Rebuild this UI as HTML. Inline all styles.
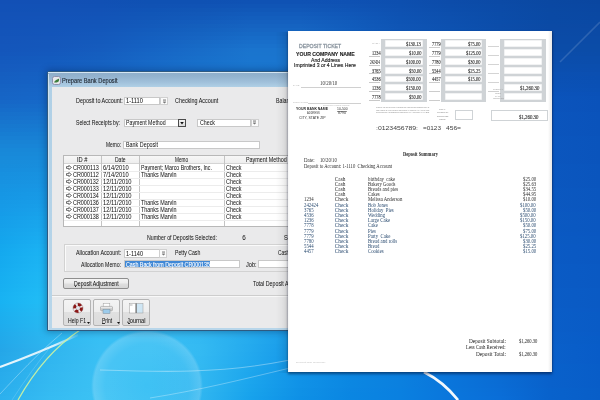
<!DOCTYPE html>
<html><head><meta charset="utf-8"><style>
html,body{margin:0;padding:0;}
body{width:600px;height:400px;overflow:hidden;position:relative;font-family:"Liberation Sans",sans-serif;}
#s{position:absolute;left:0;top:0;width:600px;height:400px;will-change:transform;}
#s>div,#s>svg{position:absolute;}
.t{white-space:pre;transform-origin:0 50%;}
#bg{position:absolute;left:0;top:0;width:600px;height:400px;}
</style></head><body>
<div id="bgrows"><div style="position:absolute;left:0;top:0px;width:600px;height:4px;background:linear-gradient(90deg,#1250b6 0.00%,#1250b5 8.33%,#1150b4 16.67%,#0f51b3 25.00%,#0f51b3 33.33%,#0f52b4 41.67%,#0f52b4 50.00%,#0e51b3 58.33%,#0d4faf 66.67%,#0c4caa 75.00%,#0b4aa6 83.33%,#0a48a2 91.67%,#0a46a0 100.00%)"></div>
<div style="position:absolute;left:0;top:4px;width:600px;height:4px;background:linear-gradient(90deg,#1251b7 0.00%,#1251b6 8.33%,#1151b5 16.67%,#1052b4 25.00%,#1053b5 33.33%,#1055b6 41.67%,#1055b6 50.00%,#0f53b4 58.33%,#0d50b0 66.67%,#0c4dab 75.00%,#0b4ba7 83.33%,#0a48a3 91.67%,#0a47a1 100.00%)"></div>
<div style="position:absolute;left:0;top:8px;width:600px;height:4px;background:linear-gradient(90deg,#1251b7 0.00%,#1252b6 8.33%,#1252b6 16.67%,#1054b6 25.00%,#1156b6 33.33%,#1158b8 41.67%,#1158b8 50.00%,#0f55b6 58.33%,#0e51b1 66.67%,#0c4eac 75.00%,#0b4ba8 83.33%,#0a49a3 91.67%,#0a47a2 100.00%)"></div>
<div style="position:absolute;left:0;top:12px;width:600px;height:4px;background:linear-gradient(90deg,#1352b7 0.00%,#1352b7 8.33%,#1253b7 16.67%,#1156b7 25.00%,#1258b8 33.33%,#125bbb 41.67%,#125bbb 50.00%,#1057b8 58.33%,#0e52b2 66.67%,#0d4fad 75.00%,#0b4ca8 83.33%,#0a49a4 91.67%,#0a48a2 100.00%)"></div>
<div style="position:absolute;left:0;top:16px;width:600px;height:4px;background:linear-gradient(90deg,#1352b8 0.00%,#1353b8 8.33%,#1254b8 16.67%,#1257b8 25.00%,#125aba 33.33%,#135ebd 41.67%,#135ebd 50.00%,#1059b9 58.33%,#0e53b3 66.67%,#0d50ae 75.00%,#0b4ca9 83.33%,#0a49a4 91.67%,#0a48a3 100.00%)"></div>
<div style="position:absolute;left:0;top:20px;width:600px;height:4px;background:linear-gradient(90deg,#1353b8 0.00%,#1354b8 8.33%,#1355b8 16.67%,#1259ba 25.00%,#135cbc 33.33%,#1460bf 41.67%,#1460bf 50.00%,#115bbb 58.33%,#0e54b4 66.67%,#0d50af 75.00%,#0b4daa 83.33%,#0a4aa5 91.67%,#0a49a4 100.00%)"></div>
<div style="position:absolute;left:0;top:24px;width:600px;height:4px;background:linear-gradient(90deg,#1353b9 0.00%,#1354b9 8.33%,#1356b9 16.67%,#135abb 25.00%,#145fbd 33.33%,#1563c1 41.67%,#1563c1 50.00%,#115cbc 58.33%,#0f55b5 66.67%,#0d51b0 75.00%,#0c4daa 83.33%,#0b4aa5 91.67%,#0b49a4 100.00%)"></div>
<div style="position:absolute;left:0;top:28px;width:600px;height:4px;background:linear-gradient(90deg,#1354b9 0.00%,#1355b9 8.33%,#1357ba 16.67%,#135cbd 25.00%,#1461bf 33.33%,#1666c3 41.67%,#1666c3 50.00%,#125ebe 58.33%,#0f56b6 66.67%,#0d52b1 75.00%,#0c4eab 83.33%,#0b4aa6 91.67%,#0b4aa5 100.00%)"></div>
<div style="position:absolute;left:0;top:32px;width:600px;height:4px;background:linear-gradient(90deg,#1354b9 0.00%,#1355ba 8.33%,#1458bb 16.67%,#145ebe 25.00%,#1563c1 33.33%,#1669c5 41.67%,#1669c5 50.00%,#1260c0 58.33%,#0f58b8 66.67%,#0d53b2 75.00%,#0c4eab 83.33%,#0b4ba6 91.67%,#0b4aa5 100.00%)"></div>
<div style="position:absolute;left:0;top:36px;width:600px;height:4px;background:linear-gradient(90deg,#1455ba 0.00%,#1456ba 8.33%,#1459bc 16.67%,#145fc0 25.00%,#1665c3 33.33%,#176cc8 41.67%,#176cc8 50.00%,#1362c1 58.33%,#0f59b9 66.67%,#0e54b3 75.00%,#0c4fac 83.33%,#0b4ba7 91.67%,#0b4ba6 100.00%)"></div>
<div style="position:absolute;left:0;top:40px;width:600px;height:4px;background:linear-gradient(90deg,#1455ba 0.00%,#1457bb 8.33%,#145abc 16.67%,#1561c1 25.00%,#1768c4 33.33%,#186eca 41.67%,#186eca 50.00%,#1364c3 58.33%,#105aba 66.67%,#0e54b4 75.00%,#0c4fad 83.33%,#0b4ba7 91.67%,#0b4ba7 100.00%)"></div>
<div style="position:absolute;left:0;top:44px;width:600px;height:4px;background:linear-gradient(90deg,#1456bb 0.00%,#1457bb 8.33%,#155bbd 16.67%,#1562c3 25.00%,#176ac6 33.33%,#1971cc 41.67%,#1971cc 50.00%,#1466c4 58.33%,#105bbb 66.67%,#0e55b5 75.00%,#0c50ad 83.33%,#0b4ca8 91.67%,#0b4ca7 100.00%)"></div>
<div style="position:absolute;left:0;top:48px;width:600px;height:4px;background:linear-gradient(90deg,#1456bb 0.00%,#1458bc 8.33%,#155cbe 16.67%,#1664c4 25.00%,#186cc8 33.33%,#1a74ce 41.67%,#1a74ce 50.00%,#1468c6 58.33%,#105cbc 66.67%,#0e56b6 75.00%,#0c50ae 83.33%,#0b4ca8 91.67%,#0b4ca8 100.00%)"></div>
<div style="position:absolute;left:0;top:52px;width:600px;height:4px;background:linear-gradient(90deg,#1457bc 0.00%,#1459bd 8.33%,#155ebf 16.67%,#1666c5 25.00%,#186dc9 33.33%,#1a75ce 41.67%,#1a74ce 50.00%,#1468c6 58.33%,#105cbc 66.67%,#0e56b6 75.00%,#0c50af 83.33%,#0b4daa 91.67%,#0b4ca9 100.00%)"></div>
<div style="position:absolute;left:0;top:56px;width:600px;height:4px;background:linear-gradient(90deg,#1459bd 0.00%,#145bbe 8.33%,#155fc0 16.67%,#1767c6 25.00%,#186fca 33.33%,#1a75cf 41.67%,#1a75cf 50.00%,#1469c7 58.33%,#105dbd 66.67%,#0e56b6 75.00%,#0c51af 83.33%,#0b4dab 91.67%,#0b4dab 100.00%)"></div>
<div style="position:absolute;left:0;top:60px;width:600px;height:4px;background:linear-gradient(90deg,#145abe 0.00%,#145cbf 8.33%,#1661c1 16.67%,#1769c7 25.00%,#1870cb 33.33%,#1a76cf 41.67%,#1a75cf 50.00%,#1469c7 58.33%,#105dbd 66.67%,#0e56b6 75.00%,#0c51b0 83.33%,#0b4ead 91.67%,#0b4dac 100.00%)"></div>
<div style="position:absolute;left:0;top:64px;width:600px;height:4px;background:linear-gradient(90deg,#155bbf 0.00%,#155dc0 8.33%,#1662c2 16.67%,#176ac8 25.00%,#1971cc 33.33%,#1a77d0 41.67%,#1975cf 50.00%,#1469c7 58.33%,#105dbd 66.67%,#0e57b7 75.00%,#0c52b1 83.33%,#0b4fae 91.67%,#0b4eae 100.00%)"></div>
<div style="position:absolute;left:0;top:68px;width:600px;height:4px;background:linear-gradient(90deg,#155cbf 0.00%,#155ec1 8.33%,#1664c4 16.67%,#186cca 25.00%,#1972cd 33.33%,#1a77d0 41.67%,#1976d0 50.00%,#146ac8 58.33%,#105ebe 66.67%,#0e57b7 75.00%,#0c52b1 83.33%,#0b4fb0 91.67%,#0b4eaf 100.00%)"></div>
<div style="position:absolute;left:0;top:72px;width:600px;height:4px;background:linear-gradient(90deg,#155ec0 0.00%,#1560c2 8.33%,#1666c5 16.67%,#186ecb 25.00%,#1974ce 33.33%,#1a78d1 41.67%,#1976d0 50.00%,#146ac8 58.33%,#105ebe 66.67%,#0e57b7 75.00%,#0c52b2 83.33%,#0b50b2 91.67%,#0b4fb1 100.00%)"></div>
<div style="position:absolute;left:0;top:76px;width:600px;height:4px;background:linear-gradient(90deg,#155fc1 0.00%,#1561c3 8.33%,#1767c6 16.67%,#186fcc 25.00%,#1975cf 33.33%,#1a78d1 41.67%,#1976d0 50.00%,#146ac8 58.33%,#105ebe 66.67%,#0e57b7 75.00%,#0d53b2 83.33%,#0b50b3 91.67%,#0a4fb2 100.00%)"></div>
<div style="position:absolute;left:0;top:80px;width:600px;height:4px;background:linear-gradient(90deg,#1560c2 0.00%,#1562c4 8.33%,#1769c7 16.67%,#1971cd 25.00%,#1976d0 33.33%,#1a79d2 41.67%,#1977d1 50.00%,#146bc9 58.33%,#105fbf 66.67%,#0e57b7 75.00%,#0d53b3 83.33%,#0b51b5 91.67%,#0a50b4 100.00%)"></div>
<div style="position:absolute;left:0;top:84px;width:600px;height:4px;background:linear-gradient(90deg,#1562c3 0.00%,#1564c5 8.33%,#176ac8 16.67%,#1972ce 25.00%,#1978d1 33.33%,#1a7ad2 41.67%,#1977d1 50.00%,#146bc9 58.33%,#105fbf 66.67%,#0e57b7 75.00%,#0d54b4 83.33%,#0b52b6 91.67%,#0a50b5 100.00%)"></div>
<div style="position:absolute;left:0;top:88px;width:600px;height:4px;background:linear-gradient(90deg,#1663c4 0.00%,#1665c6 8.33%,#176cc9 16.67%,#1974cf 25.00%,#1a79d2 33.33%,#1a7ad3 41.67%,#1877d1 50.00%,#146bc9 58.33%,#105fbf 66.67%,#0e58b8 75.00%,#0d54b4 83.33%,#0b52b8 91.67%,#0a51b6 100.00%)"></div>
<div style="position:absolute;left:0;top:92px;width:600px;height:4px;background:linear-gradient(90deg,#1664c5 0.00%,#1666c7 8.33%,#186eca 16.67%,#1a76d0 25.00%,#1a7ad3 33.33%,#1a7bd3 41.67%,#1878d2 50.00%,#146cca 58.33%,#1060c0 66.67%,#0e58b8 75.00%,#0d54b5 83.33%,#0b53ba 91.67%,#0a51b8 100.00%)"></div>
<div style="position:absolute;left:0;top:96px;width:600px;height:4px;background:linear-gradient(90deg,#1665c6 0.00%,#1667c8 8.33%,#186fcb 16.67%,#1a77d1 25.00%,#1a7bd4 33.33%,#1a7cd4 41.67%,#1878d2 50.00%,#146cca 58.33%,#1060c0 66.67%,#0e58b8 75.00%,#0d55b6 83.33%,#0b54bb 91.67%,#0a52b9 100.00%)"></div>
<div style="position:absolute;left:0;top:100px;width:600px;height:4px;background:linear-gradient(90deg,#1667c7 0.00%,#1669c9 8.33%,#1871cd 16.67%,#1a79d3 25.00%,#1a7dd4 33.33%,#1a7cd4 41.67%,#1878d2 50.00%,#146cca 58.33%,#1060c0 66.67%,#0e58b8 75.00%,#0d55b6 83.33%,#0b54bc 91.67%,#0a52ba 100.00%)"></div>
<div style="position:absolute;left:0;top:104px;width:600px;height:4px;background:linear-gradient(90deg,#166ac8 0.00%,#166cca 8.33%,#1874ce 16.67%,#1a7bd4 25.00%,#1a7ed5 33.33%,#1a7dd5 41.67%,#1879d3 50.00%,#146dcb 58.33%,#1061c1 66.67%,#0e59b9 75.00%,#0d55b6 83.33%,#0b54bc 91.67%,#0a52ba 100.00%)"></div>
<div style="position:absolute;left:0;top:108px;width:600px;height:4px;background:linear-gradient(90deg,#166dca 0.00%,#166ecb 8.33%,#1976d0 16.67%,#1b7dd5 25.00%,#1b80d6 33.33%,#1a7ed6 41.67%,#187ad3 50.00%,#146ecb 58.33%,#1062c1 66.67%,#0e59b9 75.00%,#0d56b6 83.33%,#0b54bc 91.67%,#0a52ba 100.00%)"></div>
<div style="position:absolute;left:0;top:112px;width:600px;height:4px;background:linear-gradient(90deg,#1770cb 0.00%,#1771cc 8.33%,#1978d1 16.67%,#1b7fd6 25.00%,#1b81d7 33.33%,#1b7fd6 41.67%,#197ad4 50.00%,#156ecc 58.33%,#1162c2 66.67%,#0e5aba 75.00%,#0d56b7 83.33%,#0b55bd 91.67%,#0a53bb 100.00%)"></div>
<div style="position:absolute;left:0;top:116px;width:600px;height:4px;background:linear-gradient(90deg,#1772cc 0.00%,#1774ce 8.33%,#197bd2 16.67%,#1b81d7 25.00%,#1b82d8 33.33%,#1b80d7 41.67%,#197bd4 50.00%,#156fcc 58.33%,#1163c2 66.67%,#0e5aba 75.00%,#0d56b7 83.33%,#0b55bd 91.67%,#0a53bb 100.00%)"></div>
<div style="position:absolute;left:0;top:120px;width:600px;height:4px;background:linear-gradient(90deg,#1775ce 0.00%,#1776cf 8.33%,#1a7dd4 16.67%,#1c83d8 25.00%,#1c84d9 33.33%,#1b81d8 41.67%,#197cd5 50.00%,#1570cd 58.33%,#1164c3 66.67%,#0e5bbb 75.00%,#0d56b7 83.33%,#0b55bd 91.67%,#0a53bb 100.00%)"></div>
<div style="position:absolute;left:0;top:124px;width:600px;height:4px;background:linear-gradient(90deg,#1778cf 0.00%,#1779d0 8.33%,#1a80d5 16.67%,#1c84d9 25.00%,#1c85da 33.33%,#1b82d8 41.67%,#197cd5 50.00%,#1570cd 58.33%,#1164c3 66.67%,#0f5bbb 75.00%,#0d57b7 83.33%,#0b55bd 91.67%,#0a53bb 100.00%)"></div>
<div style="position:absolute;left:0;top:128px;width:600px;height:4px;background:linear-gradient(90deg,#177ad1 0.00%,#177bd2 8.33%,#1a82d7 16.67%,#1c86da 25.00%,#1c87db 33.33%,#1b83d9 41.67%,#197dd6 50.00%,#1571ce 58.33%,#1165c4 66.67%,#0f5cbc 75.00%,#0d57b7 83.33%,#0b55bd 91.67%,#0a53bb 100.00%)"></div>
<div style="position:absolute;left:0;top:132px;width:600px;height:4px;background:linear-gradient(90deg,#177dd2 0.00%,#177ed3 8.33%,#1b84d8 16.67%,#1d88dc 25.00%,#1d88dc 33.33%,#1b84d9 41.67%,#197dd6 50.00%,#1571ce 58.33%,#1165c4 66.67%,#0f5cbc 75.00%,#0d57b7 83.33%,#0b55bd 91.67%,#0a53bb 100.00%)"></div>
<div style="position:absolute;left:0;top:136px;width:600px;height:4px;background:linear-gradient(90deg,#1880d4 0.00%,#1880d4 8.33%,#1b87da 16.67%,#1d8add 25.00%,#1d8add 33.33%,#1c85da 41.67%,#1a7ed7 50.00%,#1672cf 58.33%,#1266c5 66.67%,#0f5dbd 75.00%,#0d57b8 83.33%,#0b56be 91.67%,#0a54bc 100.00%)"></div>
<div style="position:absolute;left:0;top:140px;width:600px;height:4px;background:linear-gradient(90deg,#1883d5 0.00%,#1883d5 8.33%,#1b89db 16.67%,#1d8cde 25.00%,#1d8bde 33.33%,#1c86db 41.67%,#1a7fd7 50.00%,#1673cf 58.33%,#1267c5 66.67%,#0f5dbd 75.00%,#0d58b8 83.33%,#0b56be 91.67%,#0a54bc 100.00%)"></div>
<div style="position:absolute;left:0;top:144px;width:600px;height:4px;background:linear-gradient(90deg,#1885d7 0.00%,#1885d7 8.33%,#1c8cdd 16.67%,#1e8edf 25.00%,#1e8ddf 33.33%,#1c87db 41.67%,#1a7fd8 50.00%,#1673d0 58.33%,#1267c6 66.67%,#0f5ebe 75.00%,#0d58b8 83.33%,#0b56be 91.67%,#0a54bc 100.00%)"></div>
<div style="position:absolute;left:0;top:148px;width:600px;height:4px;background:linear-gradient(90deg,#1888d8 0.00%,#1888d8 8.33%,#1c8ede 16.67%,#1e90e0 25.00%,#1e8ee0 33.33%,#1c88dc 41.67%,#1a80d8 50.00%,#1674d0 58.33%,#1268c6 66.67%,#0f5ebe 75.00%,#0d58b8 83.33%,#0b56be 91.67%,#0a54bc 100.00%)"></div>
<div style="position:absolute;left:0;top:152px;width:600px;height:4px;background:linear-gradient(90deg,#1889d9 0.00%,#188ad9 8.33%,#1c90df 16.67%,#1e92e1 25.00%,#1e8fe1 33.33%,#1c89dd 41.67%,#1a81d8 50.00%,#1675d0 58.33%,#1268c6 66.67%,#0f5ebe 75.00%,#0d58b8 83.33%,#0b56be 91.67%,#0a54bc 100.00%)"></div>
<div style="position:absolute;left:0;top:156px;width:600px;height:4px;background:linear-gradient(90deg,#188bda 0.00%,#188bdb 8.33%,#1d91e0 16.67%,#1f93e2 25.00%,#1f91e1 33.33%,#1c8add 41.67%,#1a82d9 50.00%,#1675d1 58.33%,#1269c7 66.67%,#0f5fbf 75.00%,#0d58b9 83.33%,#0b56be 91.67%,#0a54bc 100.00%)"></div>
<div style="position:absolute;left:0;top:160px;width:600px;height:4px;background:linear-gradient(90deg,#188cdb 0.00%,#188ddc 8.33%,#1d93e1 16.67%,#1f95e2 25.00%,#1f92e2 33.33%,#1c8bde 41.67%,#1a82d9 50.00%,#1676d1 58.33%,#1269c7 66.67%,#0f5fbf 75.00%,#0d58b9 83.33%,#0b56be 91.67%,#0a54bc 100.00%)"></div>
<div style="position:absolute;left:0;top:164px;width:600px;height:4px;background:linear-gradient(90deg,#178ddc 0.00%,#188edd 8.33%,#1d94e2 16.67%,#2096e3 25.00%,#1f94e3 33.33%,#1d8cdf 41.67%,#1a83da 50.00%,#1677d2 58.33%,#126ac8 66.67%,#0f5fbf 75.00%,#0d59b9 83.33%,#0b57bf 91.67%,#0a55bd 100.00%)"></div>
<div style="position:absolute;left:0;top:168px;width:600px;height:4px;background:linear-gradient(90deg,#178ede 0.00%,#1890de 8.33%,#1e96e3 16.67%,#2098e4 25.00%,#2095e3 33.33%,#1d8edf 41.67%,#1a84da 50.00%,#1677d2 58.33%,#126ac8 66.67%,#0f60c0 75.00%,#0d59ba 83.33%,#0b57bf 91.67%,#0a55bd 100.00%)"></div>
<div style="position:absolute;left:0;top:172px;width:600px;height:4px;background:linear-gradient(90deg,#1790df 0.00%,#1892e0 8.33%,#1e98e4 16.67%,#219ae5 25.00%,#2097e4 33.33%,#1d8fe0 41.67%,#1a85db 50.00%,#1678d3 58.33%,#126bc9 66.67%,#0f60c0 75.00%,#0d59ba 83.33%,#0b57bf 91.67%,#0a55bd 100.00%)"></div>
<div style="position:absolute;left:0;top:176px;width:600px;height:4px;background:linear-gradient(90deg,#1791e0 0.00%,#1893e1 8.33%,#1e99e5 16.67%,#219be6 25.00%,#2098e4 33.33%,#1d90e0 41.67%,#1a86db 50.00%,#1678d3 58.33%,#126bc9 66.67%,#0f60c0 75.00%,#0d59ba 83.33%,#0b57bf 91.67%,#0a55bd 100.00%)"></div>
<div style="position:absolute;left:0;top:180px;width:600px;height:4px;background:linear-gradient(90deg,#1792e1 0.00%,#1895e2 8.33%,#1f9be6 16.67%,#229de6 25.00%,#219ae5 33.33%,#1d91e1 41.67%,#1a86dc 50.00%,#1679d4 58.33%,#126cca 66.67%,#0f61c1 75.00%,#0d59bb 83.33%,#0b57bf 91.67%,#0a55bd 100.00%)"></div>
<div style="position:absolute;left:0;top:184px;width:600px;height:4px;background:linear-gradient(90deg,#1794e2 0.00%,#1896e4 8.33%,#1f9ce7 16.67%,#229ee7 25.00%,#219be6 33.33%,#1d92e2 41.67%,#1a87dc 50.00%,#167ad4 58.33%,#126cca 66.67%,#0f61c1 75.00%,#0d59bb 83.33%,#0b57bf 91.67%,#0a55bd 100.00%)"></div>
<div style="position:absolute;left:0;top:188px;width:600px;height:4px;background:linear-gradient(90deg,#1695e3 0.00%,#1898e5 8.33%,#1f9ee8 16.67%,#23a0e8 25.00%,#219ce6 33.33%,#1e93e2 41.67%,#1a88dd 50.00%,#167ad5 58.33%,#126dcb 66.67%,#0f61c1 75.00%,#0d5abb 83.33%,#0b58c0 91.67%,#0a56be 100.00%)"></div>
<div style="position:absolute;left:0;top:192px;width:600px;height:4px;background:linear-gradient(90deg,#1696e4 0.00%,#189ae6 8.33%,#20a0e9 16.67%,#23a2e9 25.00%,#229ee7 33.33%,#1e94e3 41.67%,#1a89dd 50.00%,#167bd5 58.33%,#126dcb 66.67%,#0f62c2 75.00%,#0d5abc 83.33%,#0b58c0 91.67%,#0a56be 100.00%)"></div>
<div style="position:absolute;left:0;top:196px;width:600px;height:4px;background:linear-gradient(90deg,#1697e5 0.00%,#189be7 8.33%,#20a1ea 16.67%,#24a3ea 25.00%,#229fe8 33.33%,#1e95e4 41.67%,#1a8ade 50.00%,#167cd6 58.33%,#126ecc 66.67%,#0f62c2 75.00%,#0d5abc 83.33%,#0b58c0 91.67%,#0a56be 100.00%)"></div>
<div style="position:absolute;left:0;top:200px;width:600px;height:4px;background:linear-gradient(90deg,#1699e6 0.00%,#189de8 8.33%,#20a3ea 16.67%,#24a5ea 25.00%,#22a1e8 33.33%,#1e97e4 41.67%,#1a8bde 50.00%,#167cd6 58.33%,#126ecc 66.67%,#0f62c2 75.00%,#0d5abc 83.33%,#0b58c0 91.67%,#0a56be 100.00%)"></div>
<div style="position:absolute;left:0;top:204px;width:600px;height:4px;background:linear-gradient(90deg,#169ae7 0.00%,#189fe9 8.33%,#21a4eb 16.67%,#25a6ea 25.00%,#23a2e9 33.33%,#1f98e5 41.67%,#1a8cdf 50.00%,#167dd7 58.33%,#126fcd 66.67%,#0f63c3 75.00%,#0d5abc 83.33%,#0b58c0 91.67%,#0a56be 100.00%)"></div>
<div style="position:absolute;left:0;top:208px;width:600px;height:4px;background:linear-gradient(90deg,#169be8 0.00%,#19a1ea 8.33%,#21a6ec 16.67%,#26a7eb 25.00%,#24a3e9 33.33%,#1f99e5 41.67%,#1b8de0 50.00%,#167ed8 58.33%,#1270ce 66.67%,#0f63c3 75.00%,#0d5bbc 83.33%,#0b58c1 91.67%,#0a56bf 100.00%)"></div>
<div style="position:absolute;left:0;top:212px;width:600px;height:4px;background:linear-gradient(90deg,#159ce8 0.00%,#19a3eb 8.33%,#22a8ec 16.67%,#26a8eb 25.00%,#24a4ea 33.33%,#209ae6 41.67%,#1b8ee0 50.00%,#177fd8 58.33%,#1371ce 66.67%,#0f64c4 75.00%,#0d5bbd 83.33%,#0b59c1 91.67%,#0a57bf 100.00%)"></div>
<div style="position:absolute;left:0;top:216px;width:600px;height:4px;background:linear-gradient(90deg,#159ee9 0.00%,#19a5ec 8.33%,#22a9ed 16.67%,#27a9eb 25.00%,#25a5ea 33.33%,#209be6 41.67%,#1b8fe1 50.00%,#1780d9 58.33%,#1372cf 66.67%,#0f64c4 75.00%,#0d5bbd 83.33%,#0b59c1 91.67%,#0a57bf 100.00%)"></div>
<div style="position:absolute;left:0;top:220px;width:600px;height:4px;background:linear-gradient(90deg,#159fea 0.00%,#1aa7ed 8.33%,#23abee 16.67%,#28aaec 25.00%,#26a6eb 33.33%,#219ce7 41.67%,#1c90e2 50.00%,#1781da 58.33%,#1372d0 66.67%,#0f65c5 75.00%,#0d5cbd 83.33%,#0b59c2 91.67%,#0a57c0 100.00%)"></div>
<div style="position:absolute;left:0;top:224px;width:600px;height:4px;background:linear-gradient(90deg,#15a0ea 0.00%,#1aa8ee 8.33%,#23acee 16.67%,#28abec 25.00%,#26a7eb 33.33%,#219de7 41.67%,#1c91e2 50.00%,#1782da 58.33%,#1373d0 66.67%,#1065c5 75.00%,#0e5cbd 83.33%,#0a59c2 91.67%,#0a57c0 100.00%)"></div>
<div style="position:absolute;left:0;top:228px;width:600px;height:4px;background:linear-gradient(90deg,#15a2eb 0.00%,#1aaaef 8.33%,#24aeef 16.67%,#29acec 25.00%,#27a8ec 33.33%,#229ee8 41.67%,#1c92e3 50.00%,#1783db 58.33%,#1374d1 66.67%,#1066c6 75.00%,#0e5cbd 83.33%,#0a59c2 91.67%,#0a57c0 100.00%)"></div>
<div style="position:absolute;left:0;top:232px;width:600px;height:4px;background:linear-gradient(90deg,#15a3eb 0.00%,#1bacf0 8.33%,#24b0ef 16.67%,#29aeed 25.00%,#27aaec 33.33%,#22a0e8 41.67%,#1d94e3 50.00%,#1784db 58.33%,#1375d1 66.67%,#1066c6 75.00%,#0e5dbd 83.33%,#0a59c3 91.67%,#0a57c1 100.00%)"></div>
<div style="position:absolute;left:0;top:236px;width:600px;height:4px;background:linear-gradient(90deg,#14a4ec 0.00%,#1baef1 8.33%,#25b1f0 16.67%,#2aafed 25.00%,#28abed 33.33%,#23a1e9 41.67%,#1d95e4 50.00%,#1885dc 58.33%,#1476d2 66.67%,#1067c7 75.00%,#0e5dbe 83.33%,#0a5ac3 91.67%,#0a58c1 100.00%)"></div>
<div style="position:absolute;left:0;top:240px;width:600px;height:4px;background:linear-gradient(90deg,#14a5ed 0.00%,#1bb0f2 8.33%,#25b3f1 16.67%,#2bb0ed 25.00%,#29aced 33.33%,#23a2e9 41.67%,#1d96e5 50.00%,#1886dd 58.33%,#1476d3 66.67%,#1067c7 75.00%,#0e5dbe 83.33%,#0a5ac3 91.67%,#0a58c1 100.00%)"></div>
<div style="position:absolute;left:0;top:244px;width:600px;height:4px;background:linear-gradient(90deg,#14a7ed 0.00%,#1cb2f3 8.33%,#26b4f1 16.67%,#2bb1ee 25.00%,#29adee 33.33%,#24a3ea 41.67%,#1e97e5 50.00%,#1887dd 58.33%,#1477d3 66.67%,#1068c8 75.00%,#0e5ebe 83.33%,#0a5ac4 91.67%,#0a58c2 100.00%)"></div>
<div style="position:absolute;left:0;top:248px;width:600px;height:4px;background:linear-gradient(90deg,#14a8ee 0.00%,#1cb4f4 8.33%,#26b6f2 16.67%,#2cb2ee 25.00%,#2aaeee 33.33%,#24a4ea 41.67%,#1e98e6 50.00%,#1888de 58.33%,#1478d4 66.67%,#1068c8 75.00%,#0e5ebe 83.33%,#0a5ac4 91.67%,#0a58c2 100.00%)"></div>
<div style="position:absolute;left:0;top:252px;width:600px;height:4px;background:linear-gradient(90deg,#14a9ee 0.00%,#1cb5f4 8.33%,#27b7f2 16.67%,#2db3ee 25.00%,#2aafee 33.33%,#24a5ea 41.67%,#1e99e6 50.00%,#1889de 58.33%,#1479d4 66.67%,#1069c8 75.00%,#0e5ebe 83.33%,#0a5ac4 91.67%,#0a58c2 100.00%)"></div>
<div style="position:absolute;left:0;top:256px;width:600px;height:4px;background:linear-gradient(90deg,#15aaef 0.00%,#1db6f4 8.33%,#28b7f2 16.67%,#2db3ef 25.00%,#2bafee 33.33%,#25a6eb 41.67%,#1e99e7 50.00%,#1889df 58.33%,#147ad5 66.67%,#1069c9 75.00%,#0e5fbf 83.33%,#0a5ac4 91.67%,#0a58c2 100.00%)"></div>
<div style="position:absolute;left:0;top:260px;width:600px;height:4px;background:linear-gradient(90deg,#15aaef 0.00%,#1db6f4 8.33%,#28b8f2 16.67%,#2eb4ef 25.00%,#2bb0ee 33.33%,#25a6eb 41.67%,#1e9ae7 50.00%,#188adf 58.33%,#147ad5 66.67%,#106ac9 75.00%,#0e5fbf 83.33%,#0a5ac4 91.67%,#0a58c2 100.00%)"></div>
<div style="position:absolute;left:0;top:264px;width:600px;height:4px;background:linear-gradient(90deg,#15abef 0.00%,#1eb7f5 8.33%,#29b9f3 16.67%,#2fb5ef 25.00%,#2cb1ef 33.33%,#26a7eb 41.67%,#1f9be7 50.00%,#188be0 58.33%,#137bd6 66.67%,#106bca 75.00%,#0e5fc0 83.33%,#0a5bc5 91.67%,#0a59c3 100.00%)"></div>
<div style="position:absolute;left:0;top:268px;width:600px;height:4px;background:linear-gradient(90deg,#16acf0 0.00%,#1eb8f5 8.33%,#2ab9f3 16.67%,#2fb5f0 25.00%,#2cb1ef 33.33%,#26a8ec 41.67%,#1f9be8 50.00%,#188be0 58.33%,#137cd6 66.67%,#106bca 75.00%,#0e60c0 83.33%,#0a5bc5 91.67%,#0a59c3 100.00%)"></div>
<div style="position:absolute;left:0;top:272px;width:600px;height:4px;background:linear-gradient(90deg,#16adf0 0.00%,#1fb9f5 8.33%,#2bbaf3 16.67%,#30b6f0 25.00%,#2db2ef 33.33%,#27a9ec 41.67%,#1f9ce8 50.00%,#188ce1 58.33%,#137dd7 66.67%,#106ccb 75.00%,#0e60c1 83.33%,#0a5bc5 91.67%,#0a59c3 100.00%)"></div>
<div style="position:absolute;left:0;top:276px;width:600px;height:4px;background:linear-gradient(90deg,#16aef0 0.00%,#1fbaf5 8.33%,#2cbaf3 16.67%,#30b6f0 25.00%,#2db2ef 33.33%,#27aaec 41.67%,#1f9ce8 50.00%,#188ce1 58.33%,#137ed7 66.67%,#106ccb 75.00%,#0d60c1 83.33%,#0a5bc5 91.67%,#0a59c3 100.00%)"></div>
<div style="position:absolute;left:0;top:280px;width:600px;height:4px;background:linear-gradient(90deg,#17aef1 0.00%,#20baf5 8.33%,#2cbbf3 16.67%,#31b7f1 25.00%,#2eb3ef 33.33%,#28aaed 41.67%,#1f9de9 50.00%,#188de2 58.33%,#137ed8 66.67%,#106dcc 75.00%,#0d61c2 83.33%,#0a5bc5 91.67%,#0a59c3 100.00%)"></div>
<div style="position:absolute;left:0;top:284px;width:600px;height:4px;background:linear-gradient(90deg,#17aff1 0.00%,#20bbf5 8.33%,#2dbcf3 16.67%,#32b8f1 25.00%,#2eb4ef 33.33%,#28abed 41.67%,#1f9ee9 50.00%,#188ee2 58.33%,#137fd8 66.67%,#106ecc 75.00%,#0d61c2 83.33%,#0a5bc5 91.67%,#0a59c3 100.00%)"></div>
<div style="position:absolute;left:0;top:288px;width:600px;height:4px;background:linear-gradient(90deg,#17b0f1 0.00%,#21bcf6 8.33%,#2ebcf4 16.67%,#32b8f1 25.00%,#2fb4f0 33.33%,#29aced 41.67%,#209ee9 50.00%,#188ee3 58.33%,#1280d9 66.67%,#106ecd 75.00%,#0d61c3 83.33%,#0a5cc6 91.67%,#0a5ac4 100.00%)"></div>
<div style="position:absolute;left:0;top:292px;width:600px;height:4px;background:linear-gradient(90deg,#18b1f2 0.00%,#21bdf6 8.33%,#2fbdf4 16.67%,#33b9f2 25.00%,#2fb5f0 33.33%,#29adee 41.67%,#209fea 50.00%,#188fe3 58.33%,#1281d9 66.67%,#106fcd 75.00%,#0d62c3 83.33%,#0a5cc6 91.67%,#0a5ac4 100.00%)"></div>
<div style="position:absolute;left:0;top:296px;width:600px;height:4px;background:linear-gradient(90deg,#18b2f2 0.00%,#22bef6 8.33%,#30bef4 16.67%,#34baf2 25.00%,#30b6f0 33.33%,#2aaeee 41.67%,#20a0ea 50.00%,#1890e4 58.33%,#1282da 66.67%,#1070ce 75.00%,#0d62c4 83.33%,#0a5cc6 91.67%,#0a5ac4 100.00%)"></div>
<div style="position:absolute;left:0;top:300px;width:600px;height:4px;background:linear-gradient(90deg,#18b2f2 0.00%,#23bef6 8.33%,#30bef4 16.67%,#34baf2 25.00%,#30b6f0 33.33%,#2aaeee 41.67%,#20a0ea 50.00%,#1890e4 58.33%,#1282da 66.67%,#1070ce 75.00%,#0d62c4 83.33%,#0a5cc6 91.67%,#0a5ac4 100.00%)"></div>
<div style="position:absolute;left:0;top:304px;width:600px;height:4px;background:linear-gradient(90deg,#19b1f1 0.00%,#24bdf5 8.33%,#31bef4 16.67%,#35bbf2 25.00%,#30b6f0 33.33%,#29aeee 41.67%,#1f9fea 50.00%,#178fe4 58.33%,#1182da 66.67%,#0f70cf 75.00%,#0d63c5 83.33%,#0a5cc6 91.67%,#0a5ac4 100.00%)"></div>
<div style="position:absolute;left:0;top:308px;width:600px;height:4px;background:linear-gradient(90deg,#1ab0f0 0.00%,#25bcf4 8.33%,#32bef4 16.67%,#35bbf2 25.00%,#31b7f0 33.33%,#29adee 41.67%,#1e9eea 50.00%,#168ee4 58.33%,#1182db 66.67%,#0f71d0 75.00%,#0d63c6 83.33%,#0a5dc7 91.67%,#0a5ac5 100.00%)"></div>
<div style="position:absolute;left:0;top:312px;width:600px;height:4px;background:linear-gradient(90deg,#1bafef 0.00%,#26bbf4 8.33%,#33bef4 16.67%,#36bcf3 25.00%,#31b7f1 33.33%,#28adee 41.67%,#1d9de9 50.00%,#158ee3 58.33%,#1081db 66.67%,#0f71d1 75.00%,#0c64c7 83.33%,#0a5dc7 91.67%,#095bc5 100.00%)"></div>
<div style="position:absolute;left:0;top:316px;width:600px;height:4px;background:linear-gradient(90deg,#1caeee 0.00%,#27baf3 8.33%,#34bef4 16.67%,#36bcf3 25.00%,#31b7f1 33.33%,#28adee 41.67%,#1c9ce9 50.00%,#148de3 58.33%,#1081db 66.67%,#0e71d2 75.00%,#0c64c8 83.33%,#0a5dc7 91.67%,#095bc5 100.00%)"></div>
<div style="position:absolute;left:0;top:320px;width:600px;height:4px;background:linear-gradient(90deg,#1dadee 0.00%,#28baf2 8.33%,#34bef4 16.67%,#37bdf3 25.00%,#32b8f1 33.33%,#27acee 41.67%,#1b9ce9 50.00%,#148ce3 58.33%,#0f81dc 66.67%,#0e72d2 75.00%,#0c65c8 83.33%,#0a5ec8 91.67%,#095bc6 100.00%)"></div>
<div style="position:absolute;left:0;top:324px;width:600px;height:4px;background:linear-gradient(90deg,#1eaced 0.00%,#29b9f2 8.33%,#35bff4 16.67%,#37bdf3 25.00%,#32b8f1 33.33%,#27acee 41.67%,#1a9be9 50.00%,#138ce3 58.33%,#0f81dc 66.67%,#0d72d3 75.00%,#0c65c9 83.33%,#0a5ec8 91.67%,#095bc6 100.00%)"></div>
<div style="position:absolute;left:0;top:328px;width:600px;height:4px;background:linear-gradient(90deg,#1fabec 0.00%,#2ab8f1 8.33%,#36bff4 16.67%,#38bef3 25.00%,#32b8f1 33.33%,#26acee 41.67%,#199ae9 50.00%,#128be3 58.33%,#0e81dc 66.67%,#0d72d4 75.00%,#0c66ca 83.33%,#0a5ec8 91.67%,#095bc6 100.00%)"></div>
<div style="position:absolute;left:0;top:332px;width:600px;height:4px;background:linear-gradient(90deg,#20aaeb 0.00%,#2cb7f1 8.33%,#37bff4 16.67%,#38bef3 25.00%,#33b9f1 33.33%,#26abee 41.67%,#1899e9 50.00%,#118be3 58.33%,#0e81dd 66.67%,#0d73d5 75.00%,#0c66cb 83.33%,#0a5fc9 91.67%,#095bc7 100.00%)"></div>
<div style="position:absolute;left:0;top:336px;width:600px;height:4px;background:linear-gradient(90deg,#21a9ea 0.00%,#2db6f0 8.33%,#38bff4 16.67%,#39bff4 25.00%,#33b9f2 33.33%,#25abee 41.67%,#1798e8 50.00%,#108ae2 58.33%,#0d80dd 66.67%,#0c73d6 75.00%,#0b67cc 83.33%,#0a5fc9 91.67%,#085cc7 100.00%)"></div>
<div style="position:absolute;left:0;top:340px;width:600px;height:4px;background:linear-gradient(90deg,#22a8ea 0.00%,#2eb6ef 8.33%,#38bff4 16.67%,#39bff4 25.00%,#33b9f2 33.33%,#25abee 41.67%,#1698e8 50.00%,#1089e2 58.33%,#0d80dd 66.67%,#0c73d6 75.00%,#0b67cc 83.33%,#0a5fc9 91.67%,#085cc7 100.00%)"></div>
<div style="position:absolute;left:0;top:344px;width:600px;height:4px;background:linear-gradient(90deg,#23a7e9 0.00%,#2fb5ef 8.33%,#39bff4 16.67%,#3ac0f4 25.00%,#34baf2 33.33%,#24aaee 41.67%,#1597e8 50.00%,#0f89e2 58.33%,#0c80de 66.67%,#0b74d7 75.00%,#0b68cd 83.33%,#0a60ca 91.67%,#085cc8 100.00%)"></div>
<div style="position:absolute;left:0;top:348px;width:600px;height:4px;background:linear-gradient(90deg,#24a6e8 0.00%,#30b4ee 8.33%,#3abff4 16.67%,#3ac0f4 25.00%,#34baf2 33.33%,#24aaee 41.67%,#1496e8 50.00%,#0e88e2 58.33%,#0c80de 66.67%,#0b74d8 75.00%,#0b68ce 83.33%,#0a60ca 91.67%,#085cc8 100.00%)"></div>
<div style="position:absolute;left:0;top:352px;width:600px;height:4px;background:linear-gradient(90deg,#25a7e8 0.00%,#30b5ee 8.33%,#3abff4 16.67%,#3ac0f4 25.00%,#34baf2 33.33%,#23a9ee 41.67%,#1496e8 50.00%,#0e88e2 58.33%,#0c80de 66.67%,#0b74d8 75.00%,#0b68cf 83.33%,#0a60ca 91.67%,#085cc8 100.00%)"></div>
<div style="position:absolute;left:0;top:356px;width:600px;height:4px;background:linear-gradient(90deg,#25a8e9 0.00%,#31b5ef 8.33%,#3abff4 16.67%,#3ac0f4 25.00%,#33b9f2 33.33%,#22a9ee 41.67%,#1395e8 50.00%,#0d88e2 58.33%,#0c80de 66.67%,#0b74d9 75.00%,#0b69d0 83.33%,#0a60ca 91.67%,#085cc8 100.00%)"></div>
<div style="position:absolute;left:0;top:360px;width:600px;height:4px;background:linear-gradient(90deg,#26a8e9 0.00%,#31b6ef 8.33%,#3ac0f4 16.67%,#3ac0f4 25.00%,#33b9f2 33.33%,#21a8ee 41.67%,#1395e8 50.00%,#0d88e2 58.33%,#0c80de 66.67%,#0b74d9 75.00%,#0b69d0 83.33%,#0a60ca 91.67%,#085cc8 100.00%)"></div>
<div style="position:absolute;left:0;top:364px;width:600px;height:4px;background:linear-gradient(90deg,#27a9ea 0.00%,#32b7ef 8.33%,#3bc0f4 16.67%,#3ac0f4 25.00%,#33b9f1 33.33%,#20a7ed 41.67%,#1294e7 50.00%,#0d87e2 58.33%,#0b80df 66.67%,#0b75d9 75.00%,#0b6ad1 83.33%,#0961cb 91.67%,#085dc8 100.00%)"></div>
<div style="position:absolute;left:0;top:368px;width:600px;height:4px;background:linear-gradient(90deg,#27aaea 0.00%,#32b7f0 8.33%,#3bc0f4 16.67%,#3ac0f4 25.00%,#32b8f1 33.33%,#1ea7ed 41.67%,#1294e7 50.00%,#0c87e2 58.33%,#0b80df 66.67%,#0b75da 75.00%,#0b6ad2 83.33%,#0961cb 91.67%,#085dc8 100.00%)"></div>
<div style="position:absolute;left:0;top:372px;width:600px;height:4px;background:linear-gradient(90deg,#28abeb 0.00%,#33b8f0 8.33%,#3bc0f4 16.67%,#3ac0f4 25.00%,#32b8f1 33.33%,#1da6ed 41.67%,#1193e7 50.00%,#0c87e2 58.33%,#0b80df 66.67%,#0b75da 75.00%,#0b6bd3 83.33%,#0961cb 91.67%,#085dc8 100.00%)"></div>
<div style="position:absolute;left:0;top:376px;width:600px;height:4px;background:linear-gradient(90deg,#28aceb 0.00%,#33b8f0 8.33%,#3bc1f4 16.67%,#3ac0f4 25.00%,#32b8f1 33.33%,#1ca6ed 41.67%,#1193e7 50.00%,#0c87e2 58.33%,#0b80df 66.67%,#0a75da 75.00%,#0a6bd4 83.33%,#0961cb 91.67%,#085dc8 100.00%)"></div>
<div style="position:absolute;left:0;top:380px;width:600px;height:4px;background:linear-gradient(90deg,#29acec 0.00%,#34b9f1 8.33%,#3bc1f4 16.67%,#3ac0f4 25.00%,#31b7f1 33.33%,#1ba5ed 41.67%,#1092e7 50.00%,#0b87e2 58.33%,#0b80df 66.67%,#0a75db 75.00%,#0a6cd4 83.33%,#0961cb 91.67%,#085dc8 100.00%)"></div>
<div style="position:absolute;left:0;top:384px;width:600px;height:4px;background:linear-gradient(90deg,#2aadec 0.00%,#34baf1 8.33%,#3bc1f4 16.67%,#3ac0f4 25.00%,#31b7f1 33.33%,#1aa4ed 41.67%,#1092e7 50.00%,#0b87e2 58.33%,#0b80df 66.67%,#0a75db 75.00%,#0a6cd5 83.33%,#0961cb 91.67%,#085dc8 100.00%)"></div>
<div style="position:absolute;left:0;top:388px;width:600px;height:4px;background:linear-gradient(90deg,#2aaeed 0.00%,#35baf1 8.33%,#3cc1f4 16.67%,#3ac0f4 25.00%,#31b7f0 33.33%,#19a4ec 41.67%,#0f91e6 50.00%,#0b86e2 58.33%,#0a80e0 66.67%,#0a76db 75.00%,#0a6dd6 83.33%,#0862cc 91.67%,#085ec8 100.00%)"></div>
<div style="position:absolute;left:0;top:392px;width:600px;height:4px;background:linear-gradient(90deg,#2bafed 0.00%,#35bbf2 8.33%,#3cc2f4 16.67%,#3ac0f4 25.00%,#30b6f0 33.33%,#18a3ec 41.67%,#0f91e6 50.00%,#0a86e2 58.33%,#0a80e0 66.67%,#0a76dc 75.00%,#0a6dd7 83.33%,#0862cc 91.67%,#085ec8 100.00%)"></div>
<div style="position:absolute;left:0;top:396px;width:600px;height:4px;background:linear-gradient(90deg,#2cb0ee 0.00%,#36bcf2 8.33%,#3cc2f4 16.67%,#3ac0f4 25.00%,#30b6f0 33.33%,#17a2ec 41.67%,#0e90e6 50.00%,#0a86e2 58.33%,#0a80e0 66.67%,#0a76dc 75.00%,#0a6ed8 83.33%,#0862cc 91.67%,#085ec8 100.00%)"></div></div><svg id="bg" width="600" height="400" viewBox="0 0 600 400">
<defs>
<filter id="sb" x="-20%" y="-20%" width="140%" height="140%"><feGaussianBlur stdDeviation="0.45"/></filter>
<radialGradient id="g3" cx="147" cy="386" r="56" gradientUnits="userSpaceOnUse">
<stop offset="0" stop-color="#fff" stop-opacity="0.02"/><stop offset="0.75" stop-color="#fff" stop-opacity="0.07"/><stop offset="0.95" stop-color="#fff" stop-opacity="0.18"/><stop offset="1" stop-color="#fff" stop-opacity="0"/>
</radialGradient>
<linearGradient id="w1" x1="0" y1="0" x2="1" y2="0"><stop offset="0" stop-color="#fff" stop-opacity="0.9"/><stop offset="0.7" stop-color="#fff" stop-opacity="0.8"/><stop offset="1" stop-color="#fff" stop-opacity="0.1"/></linearGradient>
</defs>
<circle cx="147" cy="386" r="56" fill="url(#g3)"/>
<path d="M0 367 C 25 358, 45 350, 78 335" stroke="url(#w1)" stroke-width="2" fill="none" filter="url(#sb)"/>
<path d="M18 400 C 32 375, 50 350, 80 330" stroke="#d0f4a0" stroke-opacity="0.9" stroke-width="1.3" fill="none" filter="url(#sb)"/>
<path d="M0 394 C 18 375, 36 355, 62 333" stroke="#fff" stroke-opacity="0.35" stroke-width="0.9" fill="none"/>
<path d="M12 400 C 25 380, 38 362, 52 345" stroke="#fff" stroke-opacity="0.2" stroke-width="0.8" fill="none"/>
<path d="M100 370 C 160 372, 220 374, 290 360" stroke="#fff" stroke-opacity="0.35" stroke-width="1.1" fill="none"/>
<path d="M150 398 C 200 390, 240 380, 290 368" stroke="#fff" stroke-opacity="0.3" stroke-width="1" fill="none"/>
<path d="M424 372 C 440 380, 450 390, 458 400" stroke="#fff" stroke-opacity="0.95" stroke-width="2.8" fill="none" filter="url(#sb)"/>
<path d="M560 62 L 600 22" stroke="#fff" stroke-opacity="0.14" stroke-width="1.6" fill="none"/>
</svg>

<div id="s">
<div style="left:47px;top:71px;width:253px;height:260px;box-shadow:0 0 7px 1px rgba(0,20,60,0.35);background:linear-gradient(180deg,#8eaecb 0px,#92b2ce 4px,#a0c0da 10px,#b0d0e6 15px,#b8d6ea 100%);border:1px solid #2f5a80;box-sizing:border-box;border-radius:2px 2px 0 0;"></div>
<div style="left:48px;top:72px;width:251px;height:1px;background:#d6e6f2;"></div>
<div style="left:48px;top:73.5px;width:1px;height:256px;background:#d0e2f0;"></div>
<div style="left:52px;top:87px;width:248px;height:240.5px;background:#eaeaeb;"></div>
<svg style="left:52px;top:75.5px;width:9px;height:9px" viewBox="0 0 9 9"><rect x="0.5" y="0.5" width="8" height="8" rx="2" fill="#e8e8ec" stroke="#8a8aa8" stroke-width="0.9"/><path d="M2 6.2 C3 4.5 5 3.5 7.2 2.6 L6.8 5.2 C5.6 6.3 3.8 6.8 2 6.2Z" fill="#3d7d3a"/></svg>
<div class="t" style="left:62.40px;top:78px;font-size:6.4px;line-height:6.4px;font-family:'Liberation Sans';font-weight:normal;color:#222a34;transform:scaleX(0.8880);-webkit-text-stroke:0.12px #222a34;">Prepare Bank Deposit</div>
<div class="t" style="left:76.00px;top:98px;font-size:6.3px;line-height:6.3px;font-family:'Liberation Sans';font-weight:normal;color:#141414;transform:scaleX(0.8603);-webkit-text-stroke:0.03px #141414;">Deposit to Account:</div>
<div style="left:124px;top:97px;width:36px;height:8px;background:#fff;border:1px solid #c8c8c8;box-sizing:border-box;"></div>
<div class="t" style="left:126.00px;top:98px;font-size:6.3px;line-height:6.3px;font-family:'Liberation Sans';font-weight:normal;color:#141414;transform:scaleX(0.9100);-webkit-text-stroke:0.03px #141414;">1-1110</div>
<div style="left:160px;top:97px;width:7.5px;height:8px;background:#fbfbfb;border:1px solid #d0d0d0;box-sizing:border-box;"></div>
<svg style="left:161.5px;top:98.5px;width:5px;height:5px" viewBox="0 0 5 5"><path d="M1 0.6H4M1 1.5H4M1 2.4H4" stroke="#888" stroke-width="0.6"/><path d="M0.8 3 L4.2 3 L2.5 4.6Z" fill="#777"/></svg>
<div class="t" style="left:175.00px;top:98px;font-size:6.3px;line-height:6.3px;font-family:'Liberation Sans';font-weight:normal;color:#141414;transform:scaleX(0.8567);-webkit-text-stroke:0.03px #141414;">Checking Account</div>
<div class="t" style="left:276.00px;top:98px;font-size:6.3px;line-height:6.3px;font-family:'Liberation Sans';font-weight:normal;color:#141414;transform:scaleX(0.8346);-webkit-text-stroke:0.03px #141414;">Balance</div>
<div class="t" style="left:76.00px;top:120px;font-size:6.3px;line-height:6.3px;font-family:'Liberation Sans';font-weight:normal;color:#141414;transform:scaleX(0.8159);-webkit-text-stroke:0.03px #141414;">Select Receipts by:</div>
<div style="left:124px;top:118.5px;width:55px;height:8px;background:#fff;border:1px solid #c8c8c8;box-sizing:border-box;"></div>
<div class="t" style="left:126.00px;top:120px;font-size:6.3px;line-height:6.3px;font-family:'Liberation Sans';font-weight:normal;color:#141414;transform:scaleX(0.8315);-webkit-text-stroke:0.03px #141414;">Payment Method</div>
<div style="left:178.4px;top:118.5px;width:7.2px;height:8px;background:linear-gradient(#f2f2f2,#dcdcdc);border:1px solid #4a4a4a;box-sizing:border-box;"></div>
<svg style="left:179.9px;top:120.5px;width:4px;height:4px" viewBox="0 0 4 4"><path d="M0.2 1 L3.8 1 L2 3.4Z" fill="#111"/></svg>
<div style="left:197.3px;top:118.5px;width:53.5px;height:8px;background:#fff;border:1px solid #c8c8c8;box-sizing:border-box;"></div>
<div class="t" style="left:200.00px;top:120px;font-size:6.3px;line-height:6.3px;font-family:'Liberation Sans';font-weight:normal;color:#141414;transform:scaleX(0.8400);-webkit-text-stroke:0.03px #141414;">Check</div>
<div style="left:250.6px;top:118.5px;width:8.4px;height:8px;background:#fbfbfb;border:1px solid #d0d0d0;box-sizing:border-box;"></div>
<svg style="left:252.3px;top:120px;width:5px;height:5px" viewBox="0 0 5 5"><path d="M1 0.6H4M1 1.5H4M1 2.4H4" stroke="#888" stroke-width="0.6"/><path d="M0.8 3 L4.2 3 L2.5 4.6Z" fill="#777"/></svg>
<div class="t" style="left:106.00px;top:142px;font-size:6.3px;line-height:6.3px;font-family:'Liberation Sans';font-weight:normal;color:#141414;transform:scaleX(0.7791);-webkit-text-stroke:0.03px #141414;">Memo:</div>
<div style="left:123.4px;top:141px;width:137px;height:7.6px;background:#fff;border:1px solid #c8c8c8;box-sizing:border-box;"></div>
<div class="t" style="left:126.00px;top:142px;font-size:6.3px;line-height:6.3px;font-family:'Liberation Sans';font-weight:normal;color:#141414;transform:scaleX(0.8540);-webkit-text-stroke:0.03px #141414;">Bank Deposit</div>
<div style="left:63.4px;top:155.2px;width:236.6px;height:72px;background:#fff;border:1px solid #b8b8b8;box-sizing:border-box;"></div>
<div style="left:64.4px;top:156.2px;width:235.6px;height:7.8px;background:linear-gradient(#f7f7f7,#eeeeee);border-bottom:1px solid #d4d4d4;box-sizing:border-box;"></div>
<div style="left:101.2px;top:156.2px;width:0.8px;height:70px;background:#c4c4c4;"></div>
<div style="left:139px;top:156.2px;width:0.8px;height:70px;background:#c4c4c4;"></div>
<div style="left:224.3px;top:156.2px;width:0.8px;height:70px;background:#c4c4c4;"></div>
<div class="t" style="left:77.00px;top:157px;font-size:6.3px;line-height:6.3px;font-family:'Liberation Sans';font-weight:normal;color:#141414;transform:scaleX(0.9088);-webkit-text-stroke:0.03px #141414;">ID #</div>
<div class="t" style="left:114.70px;top:157px;font-size:6.3px;line-height:6.3px;font-family:'Liberation Sans';font-weight:normal;color:#141414;transform:scaleX(0.7965);-webkit-text-stroke:0.03px #141414;">Date</div>
<div class="t" style="left:175.20px;top:157px;font-size:6.3px;line-height:6.3px;font-family:'Liberation Sans';font-weight:normal;color:#141414;transform:scaleX(0.7427);-webkit-text-stroke:0.03px #141414;">Memo</div>
<div class="t" style="left:245.70px;top:157px;font-size:6.3px;line-height:6.3px;font-family:'Liberation Sans';font-weight:normal;color:#141414;transform:scaleX(0.8567);-webkit-text-stroke:0.03px #141414;">Payment Method</div>
<div style="left:64.4px;top:170.95px;width:235.6px;height:0.6px;background:#ececec;"></div>
<svg style="left:65.6px;top:165.40px;width:6px;height:5px" viewBox="0 0 6 5"><path d="M0.5 1.6H2.8V0.4L5.5 2.5 2.8 4.6V3.4H0.5Z" fill="#fff" stroke="#333" stroke-width="0.7"/></svg>
<div class="t" style="left:72.90px;top:165px;font-size:6.3px;line-height:6.3px;font-family:'Liberation Sans';font-weight:normal;color:#141414;transform:scaleX(0.8717);-webkit-text-stroke:0.03px #141414;">CR000113</div>
<div class="t" style="left:103.40px;top:165px;font-size:6.3px;line-height:6.3px;font-family:'Liberation Sans';font-weight:normal;color:#141414;transform:scaleX(0.9134);-webkit-text-stroke:0.03px #141414;">6/14/2010</div>
<div class="t" style="left:141.40px;top:165px;font-size:6.3px;line-height:6.3px;font-family:'Liberation Sans';font-weight:normal;color:#141414;transform:scaleX(0.8333);-webkit-text-stroke:0.03px #141414;">Payment; Marco Brothers, Inc.</div>
<div class="t" style="left:225.70px;top:165px;font-size:6.3px;line-height:6.3px;font-family:'Liberation Sans';font-weight:normal;color:#141414;transform:scaleX(0.8624);-webkit-text-stroke:0.03px #141414;">Check</div>
<div style="left:64.4px;top:177.89999999999998px;width:235.6px;height:0.6px;background:#ececec;"></div>
<svg style="left:65.6px;top:172.35px;width:6px;height:5px" viewBox="0 0 6 5"><path d="M0.5 1.6H2.8V0.4L5.5 2.5 2.8 4.6V3.4H0.5Z" fill="#fff" stroke="#333" stroke-width="0.7"/></svg>
<div class="t" style="left:72.90px;top:172px;font-size:6.3px;line-height:6.3px;font-family:'Liberation Sans';font-weight:normal;color:#141414;transform:scaleX(0.8717);-webkit-text-stroke:0.03px #141414;">CR000112</div>
<div class="t" style="left:103.40px;top:172px;font-size:6.3px;line-height:6.3px;font-family:'Liberation Sans';font-weight:normal;color:#141414;transform:scaleX(0.9134);-webkit-text-stroke:0.03px #141414;">7/14/2010</div>
<div class="t" style="left:141.40px;top:172px;font-size:6.3px;line-height:6.3px;font-family:'Liberation Sans';font-weight:normal;color:#141414;transform:scaleX(0.8593);-webkit-text-stroke:0.03px #141414;">Thanks Marvin</div>
<div class="t" style="left:225.70px;top:172px;font-size:6.3px;line-height:6.3px;font-family:'Liberation Sans';font-weight:normal;color:#141414;transform:scaleX(0.8624);-webkit-text-stroke:0.03px #141414;">Check</div>
<div style="left:64.4px;top:184.85px;width:235.6px;height:0.6px;background:#ececec;"></div>
<svg style="left:65.6px;top:179.30px;width:6px;height:5px" viewBox="0 0 6 5"><path d="M0.5 1.6H2.8V0.4L5.5 2.5 2.8 4.6V3.4H0.5Z" fill="#fff" stroke="#333" stroke-width="0.7"/></svg>
<div class="t" style="left:72.90px;top:179px;font-size:6.3px;line-height:6.3px;font-family:'Liberation Sans';font-weight:normal;color:#141414;transform:scaleX(0.8582);-webkit-text-stroke:0.03px #141414;">CR000132</div>
<div class="t" style="left:103.40px;top:179px;font-size:6.3px;line-height:6.3px;font-family:'Liberation Sans';font-weight:normal;color:#141414;transform:scaleX(0.9207);-webkit-text-stroke:0.03px #141414;">12/11/2010</div>
<div class="t" style="left:225.70px;top:179px;font-size:6.3px;line-height:6.3px;font-family:'Liberation Sans';font-weight:normal;color:#141414;transform:scaleX(0.8624);-webkit-text-stroke:0.03px #141414;">Check</div>
<div style="left:64.4px;top:191.79999999999998px;width:235.6px;height:0.6px;background:#ececec;"></div>
<svg style="left:65.6px;top:186.25px;width:6px;height:5px" viewBox="0 0 6 5"><path d="M0.5 1.6H2.8V0.4L5.5 2.5 2.8 4.6V3.4H0.5Z" fill="#fff" stroke="#333" stroke-width="0.7"/></svg>
<div class="t" style="left:72.90px;top:186px;font-size:6.3px;line-height:6.3px;font-family:'Liberation Sans';font-weight:normal;color:#141414;transform:scaleX(0.8582);-webkit-text-stroke:0.03px #141414;">CR000133</div>
<div class="t" style="left:103.40px;top:186px;font-size:6.3px;line-height:6.3px;font-family:'Liberation Sans';font-weight:normal;color:#141414;transform:scaleX(0.9207);-webkit-text-stroke:0.03px #141414;">12/11/2010</div>
<div class="t" style="left:225.70px;top:186px;font-size:6.3px;line-height:6.3px;font-family:'Liberation Sans';font-weight:normal;color:#141414;transform:scaleX(0.8624);-webkit-text-stroke:0.03px #141414;">Check</div>
<div style="left:64.4px;top:198.75px;width:235.6px;height:0.6px;background:#ececec;"></div>
<svg style="left:65.6px;top:193.20px;width:6px;height:5px" viewBox="0 0 6 5"><path d="M0.5 1.6H2.8V0.4L5.5 2.5 2.8 4.6V3.4H0.5Z" fill="#fff" stroke="#333" stroke-width="0.7"/></svg>
<div class="t" style="left:72.90px;top:193px;font-size:6.3px;line-height:6.3px;font-family:'Liberation Sans';font-weight:normal;color:#141414;transform:scaleX(0.8582);-webkit-text-stroke:0.03px #141414;">CR000134</div>
<div class="t" style="left:103.40px;top:193px;font-size:6.3px;line-height:6.3px;font-family:'Liberation Sans';font-weight:normal;color:#141414;transform:scaleX(0.9207);-webkit-text-stroke:0.03px #141414;">12/11/2010</div>
<div class="t" style="left:225.70px;top:193px;font-size:6.3px;line-height:6.3px;font-family:'Liberation Sans';font-weight:normal;color:#141414;transform:scaleX(0.8624);-webkit-text-stroke:0.03px #141414;">Check</div>
<div style="left:64.4px;top:205.7px;width:235.6px;height:0.6px;background:#ececec;"></div>
<svg style="left:65.6px;top:200.15px;width:6px;height:5px" viewBox="0 0 6 5"><path d="M0.5 1.6H2.8V0.4L5.5 2.5 2.8 4.6V3.4H0.5Z" fill="#fff" stroke="#333" stroke-width="0.7"/></svg>
<div class="t" style="left:72.90px;top:200px;font-size:6.3px;line-height:6.3px;font-family:'Liberation Sans';font-weight:normal;color:#141414;transform:scaleX(0.8582);-webkit-text-stroke:0.03px #141414;">CR000136</div>
<div class="t" style="left:103.40px;top:200px;font-size:6.3px;line-height:6.3px;font-family:'Liberation Sans';font-weight:normal;color:#141414;transform:scaleX(0.9207);-webkit-text-stroke:0.03px #141414;">12/11/2010</div>
<div class="t" style="left:141.40px;top:200px;font-size:6.3px;line-height:6.3px;font-family:'Liberation Sans';font-weight:normal;color:#141414;transform:scaleX(0.8593);-webkit-text-stroke:0.03px #141414;">Thanks Marvin</div>
<div class="t" style="left:225.70px;top:200px;font-size:6.3px;line-height:6.3px;font-family:'Liberation Sans';font-weight:normal;color:#141414;transform:scaleX(0.8624);-webkit-text-stroke:0.03px #141414;">Check</div>
<div style="left:64.4px;top:212.64999999999998px;width:235.6px;height:0.6px;background:#ececec;"></div>
<svg style="left:65.6px;top:207.10px;width:6px;height:5px" viewBox="0 0 6 5"><path d="M0.5 1.6H2.8V0.4L5.5 2.5 2.8 4.6V3.4H0.5Z" fill="#fff" stroke="#333" stroke-width="0.7"/></svg>
<div class="t" style="left:72.90px;top:207px;font-size:6.3px;line-height:6.3px;font-family:'Liberation Sans';font-weight:normal;color:#141414;transform:scaleX(0.8582);-webkit-text-stroke:0.03px #141414;">CR000137</div>
<div class="t" style="left:103.40px;top:207px;font-size:6.3px;line-height:6.3px;font-family:'Liberation Sans';font-weight:normal;color:#141414;transform:scaleX(0.9207);-webkit-text-stroke:0.03px #141414;">12/11/2010</div>
<div class="t" style="left:141.40px;top:207px;font-size:6.3px;line-height:6.3px;font-family:'Liberation Sans';font-weight:normal;color:#141414;transform:scaleX(0.8593);-webkit-text-stroke:0.03px #141414;">Thanks Marvin</div>
<div class="t" style="left:225.70px;top:207px;font-size:6.3px;line-height:6.3px;font-family:'Liberation Sans';font-weight:normal;color:#141414;transform:scaleX(0.8624);-webkit-text-stroke:0.03px #141414;">Check</div>
<div style="left:64.4px;top:219.6px;width:235.6px;height:0.6px;background:#ececec;"></div>
<svg style="left:65.6px;top:214.05px;width:6px;height:5px" viewBox="0 0 6 5"><path d="M0.5 1.6H2.8V0.4L5.5 2.5 2.8 4.6V3.4H0.5Z" fill="#fff" stroke="#333" stroke-width="0.7"/></svg>
<div class="t" style="left:72.90px;top:214px;font-size:6.3px;line-height:6.3px;font-family:'Liberation Sans';font-weight:normal;color:#141414;transform:scaleX(0.8582);-webkit-text-stroke:0.03px #141414;">CR000138</div>
<div class="t" style="left:103.40px;top:214px;font-size:6.3px;line-height:6.3px;font-family:'Liberation Sans';font-weight:normal;color:#141414;transform:scaleX(0.9207);-webkit-text-stroke:0.03px #141414;">12/11/2010</div>
<div class="t" style="left:141.40px;top:214px;font-size:6.3px;line-height:6.3px;font-family:'Liberation Sans';font-weight:normal;color:#141414;transform:scaleX(0.8593);-webkit-text-stroke:0.03px #141414;">Thanks Marvin</div>
<div class="t" style="left:225.70px;top:214px;font-size:6.3px;line-height:6.3px;font-family:'Liberation Sans';font-weight:normal;color:#141414;transform:scaleX(0.8624);-webkit-text-stroke:0.03px #141414;">Check</div>
<div class="t" style="left:147.00px;top:235px;font-size:6.3px;line-height:6.3px;font-family:'Liberation Sans';font-weight:normal;color:#141414;transform:scaleX(0.8364);-webkit-text-stroke:0.03px #141414;">Number of Deposits Selected:</div>
<div class="t" style="left:242.30px;top:235px;font-size:6.3px;line-height:6.3px;font-family:'Liberation Sans';font-weight:normal;color:#141414;-webkit-text-stroke:0.03px #141414;">6</div>
<div class="t" style="left:283.50px;top:235px;font-size:6.3px;line-height:6.3px;font-family:'Liberation Sans';font-weight:normal;color:#141414;transform:scaleX(0.9195);-webkit-text-stroke:0.03px #141414;">Selected Total:</div>
<div style="left:64px;top:244px;width:236px;height:28px;border:1px solid #d2d2d2;border-right:none;box-sizing:border-box;box-shadow:inset 1px 1px 0 #fafafa;"></div>
<div class="t" style="left:75.50px;top:250px;font-size:6.3px;line-height:6.3px;font-family:'Liberation Sans';font-weight:normal;color:#141414;transform:scaleX(0.8492);-webkit-text-stroke:0.03px #141414;">Allocation Account:</div>
<div style="left:124px;top:249px;width:35.5px;height:8.5px;background:#fff;border:1px solid #c8c8c8;box-sizing:border-box;"></div>
<div class="t" style="left:126.00px;top:251px;font-size:6.3px;line-height:6.3px;font-family:'Liberation Sans';font-weight:normal;color:#141414;transform:scaleX(0.8878);-webkit-text-stroke:0.03px #141414;">1-1140</div>
<div style="left:159.4px;top:249px;width:8px;height:8.5px;background:#fbfbfb;border:1px solid #d0d0d0;box-sizing:border-box;"></div>
<svg style="left:161.2px;top:250.8px;width:5px;height:5px" viewBox="0 0 5 5"><path d="M1 0.6H4M1 1.5H4M1 2.4H4" stroke="#888" stroke-width="0.6"/><path d="M0.8 3 L4.2 3 L2.5 4.6Z" fill="#777"/></svg>
<div class="t" style="left:174.50px;top:250px;font-size:6.3px;line-height:6.3px;font-family:'Liberation Sans';font-weight:normal;color:#141414;transform:scaleX(0.8211);-webkit-text-stroke:0.03px #141414;">Petty Cash</div>
<div class="t" style="left:277.70px;top:250px;font-size:6.3px;line-height:6.3px;font-family:'Liberation Sans';font-weight:normal;color:#141414;transform:scaleX(0.7649);-webkit-text-stroke:0.03px #141414;">Cash Account</div>
<div class="t" style="left:81.00px;top:262px;font-size:6.3px;line-height:6.3px;font-family:'Liberation Sans';font-weight:normal;color:#141414;transform:scaleX(0.8278);-webkit-text-stroke:0.03px #141414;">Allocation Memo:</div>
<div style="left:124px;top:260.2px;width:115.5px;height:8px;background:#fff;border:1px solid #c8c8c8;box-sizing:border-box;"></div>
<div style="left:125.4px;top:261.2px;width:84.3px;height:6.2px;background:#4088d6;"></div>
<div class="t" style="left:125.60px;top:262px;font-size:6.3px;line-height:6.3px;font-family:'Liberation Sans';font-weight:normal;color:#ffffff;transform:scaleX(0.8417);-webkit-text-stroke:0.1px #ffffff;">Cash Back from Deposit CR000135</div>
<div class="t" style="left:245.70px;top:262px;font-size:6.3px;line-height:6.3px;font-family:'Liberation Sans';font-weight:normal;color:#141414;transform:scaleX(0.8902);-webkit-text-stroke:0.03px #141414;">Job:</div>
<div style="left:258.2px;top:260.2px;width:41.80000000000001px;height:8px;background:#fff;border:1px solid #c8c8c8;box-sizing:border-box;"></div>
<div style="left:63.4px;top:278.4px;width:66px;height:10.4px;background:linear-gradient(#f4f4f4 0%,#ececec 45%,#dedede 55%,#d6d6d6 100%);border:1px solid #8e8e8e;border-radius:2px;box-sizing:border-box;"></div>
<div class="t" style="left:74.00px;top:281px;font-size:6.3px;line-height:6.3px;font-family:'Liberation Sans';font-weight:normal;color:#141414;transform:scaleX(0.8238);-webkit-text-stroke:0.03px #141414;">Deposit Adjustment</div>
<div style="left:74.5px;top:285.6px;width:1.2px;height:0.5px;background:#222;"></div>
<div class="t" style="left:253.00px;top:281px;font-size:6.3px;line-height:6.3px;font-family:'Liberation Sans';font-weight:normal;color:#141414;transform:scaleX(0.8437);-webkit-text-stroke:0.03px #141414;">Total Deposit Amount:</div>
<div style="left:52px;top:295px;width:248px;height:1px;background:#cdcdcd;"></div>
<div style="left:52px;top:296px;width:248px;height:1px;background:#f8f8f8;"></div>
<div style="left:63.3px;top:299px;width:28px;height:26.6px;background:linear-gradient(#f4f4f4 0%,#eeeeee 46%,#e0e0e0 48%,#dcdcdc 100%);border:1px solid #b4b4b4;border-radius:2px;box-sizing:border-box;"></div>
<div style="left:92.7px;top:299px;width:27.8px;height:26.6px;background:linear-gradient(#f4f4f4 0%,#eeeeee 46%,#e0e0e0 48%,#dcdcdc 100%);border:1px solid #b4b4b4;border-radius:2px;box-sizing:border-box;"></div>
<div style="left:122.3px;top:299px;width:27.3px;height:26.6px;background:linear-gradient(#f4f4f4 0%,#eeeeee 46%,#e0e0e0 48%,#dcdcdc 100%);border:1px solid #b4b4b4;border-radius:2px;box-sizing:border-box;"></div>
<svg style="left:71.5px;top:302.2px;width:12px;height:12px" viewBox="0 0 12 12"><circle cx="6" cy="6" r="3.5" fill="none" stroke="#f4eeee" stroke-width="3"/><circle cx="6" cy="6" r="3.5" fill="none" stroke="#8c1616" stroke-width="3" stroke-dasharray="3.4 2.1" transform="rotate(-10 6 6)"/><circle cx="6" cy="6" r="5" fill="none" stroke="#7a5050" stroke-width="0.5" stroke-opacity="0.7"/><circle cx="6" cy="6" r="2" fill="#e4e8ee" stroke="#7a5050" stroke-width="0.4" stroke-opacity="0.6"/></svg>
<div class="t" style="left:68.00px;top:318px;font-size:6.3px;line-height:6.3px;font-family:'Liberation Sans';font-weight:normal;color:#141414;transform:scaleX(0.8160);-webkit-text-stroke:0.03px #141414;">Help F1</div>
<svg style="left:87.2px;top:322.2px;width:3px;height:2px" viewBox="0 0 3 2"><path d="M0 0H3L1.5 2Z" fill="#111"/></svg>
<svg style="left:100px;top:302.5px;width:13px;height:11px" viewBox="0 0 13 11"><rect x="3.2" y="0.5" width="6.6" height="3.4" fill="#fdfdfd" stroke="#a0a0a0" stroke-width="0.5"/><rect x="0.6" y="3.4" width="11.8" height="4.4" rx="0.8" fill="#cfcfcf" stroke="#8a8a8a" stroke-width="0.5"/><rect x="1" y="3.8" width="11" height="1.4" fill="#e8e8e8"/><rect x="3" y="6.2" width="7" height="4.2" fill="#9ccbeb" stroke="#7a8a96" stroke-width="0.5"/></svg>
<div class="t" style="left:102.00px;top:318px;font-size:6.3px;line-height:6.3px;font-family:'Liberation Sans';font-weight:normal;color:#141414;transform:scaleX(0.7874);-webkit-text-stroke:0.03px #141414;">Print</div>
<div style="left:102.2px;top:323.3px;width:2.6px;height:0.5px;background:#333;"></div>
<svg style="left:116.8px;top:322.2px;width:3px;height:2px" viewBox="0 0 3 2"><path d="M0 0H3L1.5 2Z" fill="#111"/></svg>
<svg style="left:129px;top:303px;width:15px;height:10.5px" viewBox="0 0 15 10.5"><rect x="0.5" y="0.5" width="6.5" height="9.5" fill="#fff" stroke="#9a9a9a" stroke-width="0.5"/><rect x="7.2" y="0.5" width="6.8" height="9.5" fill="#cfe6f4" stroke="#9a9a9a" stroke-width="0.5"/><rect x="6.6" y="0.5" width="1" height="9.5" fill="#6a6a6a"/><rect x="1" y="1" width="2.5" height="2" fill="#d8d8d8"/></svg>
<div class="t" style="left:126.80px;top:318px;font-size:6.3px;line-height:6.3px;font-family:'Liberation Sans';font-weight:normal;color:#141414;transform:scaleX(0.8953);-webkit-text-stroke:0.03px #141414;">Journal</div>
<div style="left:128px;top:323.3px;width:2.2px;height:0.5px;background:#333;"></div>
<div style="left:276px;top:31.5px;width:12px;height:341.5px;background:linear-gradient(90deg,rgba(0,0,0,0),rgba(0,0,0,0.04) 50%,rgba(0,0,0,0.09) 85%,rgba(0,0,0,0.13));"></div>
<div style="left:288px;top:30.5px;width:264px;height:341.5px;background:linear-gradient(90deg,#f6f6f6 0px,#fff 2px,#fff calc(100% - 4px),#e8e8e8 100%);box-shadow:0 1.5px 2.5px rgba(0,10,40,0.5), 1px 0 1px rgba(0,0,0,0.12);"></div>
<div class="t" style="left:299.00px;top:44px;font-size:5.2px;line-height:5.2px;font-family:'Liberation Sans';font-weight:normal;color:#8e98a2;transform:scaleX(0.9939);-webkit-text-stroke:0.3px #8e98a2;">DEPOSIT TICKET</div>
<div class="t" style="left:296.00px;top:52px;font-size:5.4px;line-height:5.4px;font-family:'Liberation Sans';font-weight:bold;color:#222;transform:scaleX(0.9562);-webkit-text-stroke:0.12px #222;">YOUR COMPANY NAME</div>
<div class="t" style="left:310.60px;top:58px;font-size:5.8px;line-height:5.8px;font-family:'Liberation Sans';font-weight:normal;color:#222;transform:scaleX(0.8853);-webkit-text-stroke:0.15px #222;">And Address</div>
<div class="t" style="left:294.40px;top:63px;font-size:5.8px;line-height:5.8px;font-family:'Liberation Sans';font-weight:normal;color:#222;transform:scaleX(0.8793);-webkit-text-stroke:0.15px #222;">Imprinted 3 or 4 Lines Here</div>
<div class="t" style="left:293.00px;top:84px;font-size:2.2px;line-height:2.2px;font-family:'Liberation Sans';font-weight:normal;color:#b8b8b8;transform:scaleX(1.1045);">DATE</div>
<div class="t" style="left:320.00px;top:81px;font-size:5.4px;line-height:5.4px;font-family:'Liberation Serif';font-weight:normal;color:#333;transform:scaleX(0.9010);">10/20/10</div>
<div style="left:300.7px;top:86.5px;width:60.6px;height:0.5px;background:#d0d0d0;"></div>
<div class="t" style="left:293.00px;top:101px;font-size:2.2px;line-height:2.2px;font-family:'Liberation Sans';font-weight:normal;color:#b8b8b8;transform:scaleX(1.1838);">SIGNATURE</div>
<div style="left:308px;top:103.1px;width:53.3px;height:0.5px;background:#d0d0d0;"></div>
<div class="t" style="left:322.70px;top:104px;font-size:2.0px;line-height:2.0px;font-family:'Liberation Sans';font-weight:normal;color:#b0b0b0;transform:scaleX(0.5606);">SIGN HERE FOR CASH RECEIVED (IF REQUIRED)</div>
<div class="t" style="left:296.00px;top:108px;font-size:3.8px;line-height:3.8px;font-family:'Liberation Sans';font-weight:bold;color:#2a2a2a;transform:scaleX(0.9077);">YOUR BANK NAME</div>
<div class="t" style="left:307.30px;top:112px;font-size:3.8px;line-height:3.8px;font-family:'Liberation Sans';font-weight:normal;color:#333;transform:scaleX(0.6913);">ADDRESS</div>
<div class="t" style="left:298.70px;top:117px;font-size:3.8px;line-height:3.8px;font-family:'Liberation Sans';font-weight:normal;color:#333;transform:scaleX(0.9196);">CITY, STATE ZIP</div>
<div class="t" style="left:336.70px;top:108px;font-size:3.8px;line-height:3.8px;font-family:'Liberation Sans';font-weight:normal;color:#383838;transform:scaleX(0.8959);">10-500</div>
<div style="left:336.7px;top:110.7px;width:10.6px;height:0.5px;background:#999;"></div>
<div class="t" style="left:338.00px;top:112px;font-size:3.8px;line-height:3.8px;font-family:'Liberation Sans';font-weight:normal;color:#383838;transform:scaleX(0.9464);">8790</div>
<div style="left:381px;top:39.2px;width:46px;height:62.8px;background:#cfd3d6;"></div>
<div style="left:384.6px;top:40.4px;width:38.6px;height:6.8px;background:#fff;box-shadow:inset 0 0 0 0.5px #e4e6e8;"></div>
<div style="left:384.6px;top:49.2px;width:38.6px;height:6.8px;background:#fff;box-shadow:inset 0 0 0 0.5px #e4e6e8;"></div>
<div style="left:384.6px;top:58.0px;width:38.6px;height:6.8px;background:#fff;box-shadow:inset 0 0 0 0.5px #e4e6e8;"></div>
<div style="left:384.6px;top:66.8px;width:38.6px;height:6.8px;background:#fff;box-shadow:inset 0 0 0 0.5px #e4e6e8;"></div>
<div style="left:384.6px;top:75.6px;width:38.6px;height:6.8px;background:#fff;box-shadow:inset 0 0 0 0.5px #e4e6e8;"></div>
<div style="left:384.6px;top:84.4px;width:38.6px;height:6.8px;background:#fff;box-shadow:inset 0 0 0 0.5px #e4e6e8;"></div>
<div style="left:384.6px;top:93.2px;width:38.6px;height:6.8px;background:#fff;box-shadow:inset 0 0 0 0.5px #e4e6e8;"></div>
<div style="left:441px;top:39.2px;width:45px;height:62.8px;background:#cfd3d6;"></div>
<div style="left:444.6px;top:40.4px;width:37.6px;height:6.8px;background:#fff;box-shadow:inset 0 0 0 0.5px #e4e6e8;"></div>
<div style="left:444.6px;top:49.2px;width:37.6px;height:6.8px;background:#fff;box-shadow:inset 0 0 0 0.5px #e4e6e8;"></div>
<div style="left:444.6px;top:58.0px;width:37.6px;height:6.8px;background:#fff;box-shadow:inset 0 0 0 0.5px #e4e6e8;"></div>
<div style="left:444.6px;top:66.8px;width:37.6px;height:6.8px;background:#fff;box-shadow:inset 0 0 0 0.5px #e4e6e8;"></div>
<div style="left:444.6px;top:75.6px;width:37.6px;height:6.8px;background:#fff;box-shadow:inset 0 0 0 0.5px #e4e6e8;"></div>
<div style="left:444.6px;top:84.4px;width:37.6px;height:6.8px;background:#fff;box-shadow:inset 0 0 0 0.5px #e4e6e8;"></div>
<div style="left:444.6px;top:93.2px;width:37.6px;height:6.8px;background:#fff;box-shadow:inset 0 0 0 0.5px #e4e6e8;"></div>
<div style="left:500px;top:39.2px;width:46px;height:62.8px;background:#cfd3d6;"></div>
<div style="left:503.6px;top:40.4px;width:38.6px;height:6.8px;background:#fff;box-shadow:inset 0 0 0 0.5px #e4e6e8;"></div>
<div style="left:503.6px;top:49.2px;width:38.6px;height:6.8px;background:#fff;box-shadow:inset 0 0 0 0.5px #e4e6e8;"></div>
<div style="left:503.6px;top:58.0px;width:38.6px;height:6.8px;background:#fff;box-shadow:inset 0 0 0 0.5px #e4e6e8;"></div>
<div style="left:503.6px;top:66.8px;width:38.6px;height:6.8px;background:#fff;box-shadow:inset 0 0 0 0.5px #e4e6e8;"></div>
<div style="left:503.6px;top:75.6px;width:38.6px;height:6.8px;background:#fff;box-shadow:inset 0 0 0 0.5px #e4e6e8;"></div>
<div style="left:503.6px;top:84.4px;width:38.6px;height:6.8px;background:#fff;box-shadow:inset 0 0 0 0.5px #e4e6e8;"></div>
<div style="left:503.6px;top:93.2px;width:38.6px;height:6.8px;background:#fff;box-shadow:inset 0 0 0 0.5px #e4e6e8;"></div>
<div class="t" style="left:406.10px;top:42px;font-size:5.6px;line-height:5.6px;font-family:'Liberation Serif';font-weight:normal;color:#1e1e1e;transform:scaleX(0.8187);-webkit-text-stroke:0.1px #1e1e1e;">$130.13</div>
<div class="t" style="left:371.70px;top:42px;font-size:2.0px;line-height:2.0px;font-family:'Liberation Sans';font-weight:normal;color:#a8a8a8;transform:scaleX(1.3137);">CASH</div>
<div class="t" style="left:468.20px;top:42px;font-size:5.6px;line-height:5.6px;font-family:'Liberation Serif';font-weight:normal;color:#1e1e1e;transform:scaleX(0.8052);-webkit-text-stroke:0.1px #1e1e1e;">$75.00</div>
<div class="t" style="left:431.70px;top:42px;font-size:5.6px;line-height:5.6px;font-family:'Liberation Serif';font-weight:normal;color:#262626;transform:scaleX(0.7679);-webkit-text-stroke:0.1px #262626;">7779</div>
<div style="left:428.5px;top:47.0px;width:11.7px;height:0.5px;background:#cccccc;"></div>
<div style="left:488px;top:46.300000000000004px;width:11px;height:0.5px;background:#d4d4d4;"></div>
<div class="t" style="left:408.60px;top:51px;font-size:5.6px;line-height:5.6px;font-family:'Liberation Serif';font-weight:normal;color:#1e1e1e;transform:scaleX(0.8052);-webkit-text-stroke:0.1px #1e1e1e;">$10.00</div>
<div class="t" style="left:371.60px;top:51px;font-size:5.6px;line-height:5.6px;font-family:'Liberation Serif';font-weight:normal;color:#262626;transform:scaleX(0.7679);-webkit-text-stroke:0.1px #262626;">1234</div>
<div style="left:368.5px;top:55.800000000000004px;width:11.7px;height:0.5px;background:#c8c8c8;"></div>
<div class="t" style="left:465.70px;top:51px;font-size:5.6px;line-height:5.6px;font-family:'Liberation Serif';font-weight:normal;color:#1e1e1e;transform:scaleX(0.8187);-webkit-text-stroke:0.1px #1e1e1e;">$125.00</div>
<div class="t" style="left:431.70px;top:51px;font-size:5.6px;line-height:5.6px;font-family:'Liberation Serif';font-weight:normal;color:#262626;transform:scaleX(0.7679);-webkit-text-stroke:0.1px #262626;">7779</div>
<div style="left:428.5px;top:55.800000000000004px;width:11.7px;height:0.5px;background:#cccccc;"></div>
<div style="left:488px;top:55.10000000000001px;width:11px;height:0.5px;background:#d4d4d4;"></div>
<div class="t" style="left:406.10px;top:60px;font-size:5.6px;line-height:5.6px;font-family:'Liberation Serif';font-weight:normal;color:#1e1e1e;transform:scaleX(0.8187);-webkit-text-stroke:0.1px #1e1e1e;">$100.00</div>
<div class="t" style="left:370.40px;top:60px;font-size:5.6px;line-height:5.6px;font-family:'Liberation Serif';font-weight:normal;color:#262626;transform:scaleX(0.5833);-webkit-text-stroke:0.1px #262626;">242424</div>
<div style="left:368.5px;top:64.60000000000001px;width:11.7px;height:0.5px;background:#c8c8c8;"></div>
<div class="t" style="left:468.20px;top:60px;font-size:5.6px;line-height:5.6px;font-family:'Liberation Serif';font-weight:normal;color:#1e1e1e;transform:scaleX(0.8052);-webkit-text-stroke:0.1px #1e1e1e;">$30.00</div>
<div class="t" style="left:431.70px;top:60px;font-size:5.6px;line-height:5.6px;font-family:'Liberation Serif';font-weight:normal;color:#262626;transform:scaleX(0.7679);-webkit-text-stroke:0.1px #262626;">7780</div>
<div style="left:428.5px;top:64.60000000000001px;width:11.7px;height:0.5px;background:#cccccc;"></div>
<div style="left:488px;top:63.900000000000006px;width:11px;height:0.5px;background:#d4d4d4;"></div>
<div class="t" style="left:408.60px;top:69px;font-size:5.6px;line-height:5.6px;font-family:'Liberation Serif';font-weight:normal;color:#1e1e1e;transform:scaleX(0.8052);-webkit-text-stroke:0.1px #1e1e1e;">$50.00</div>
<div class="t" style="left:371.60px;top:69px;font-size:5.6px;line-height:5.6px;font-family:'Liberation Serif';font-weight:normal;color:#262626;transform:scaleX(0.7679);-webkit-text-stroke:0.1px #262626;">3765</div>
<div style="left:368.5px;top:73.4px;width:11.7px;height:0.5px;background:#c8c8c8;"></div>
<div class="t" style="left:468.20px;top:69px;font-size:5.6px;line-height:5.6px;font-family:'Liberation Serif';font-weight:normal;color:#1e1e1e;transform:scaleX(0.8052);-webkit-text-stroke:0.1px #1e1e1e;">$25.25</div>
<div class="t" style="left:431.70px;top:69px;font-size:5.6px;line-height:5.6px;font-family:'Liberation Serif';font-weight:normal;color:#262626;transform:scaleX(0.7679);-webkit-text-stroke:0.1px #262626;">5544</div>
<div style="left:428.5px;top:73.4px;width:11.7px;height:0.5px;background:#cccccc;"></div>
<div style="left:488px;top:72.7px;width:11px;height:0.5px;background:#d4d4d4;"></div>
<div class="t" style="left:406.10px;top:77px;font-size:5.6px;line-height:5.6px;font-family:'Liberation Serif';font-weight:normal;color:#1e1e1e;transform:scaleX(0.8187);-webkit-text-stroke:0.1px #1e1e1e;">$500.00</div>
<div class="t" style="left:371.60px;top:77px;font-size:5.6px;line-height:5.6px;font-family:'Liberation Serif';font-weight:normal;color:#262626;transform:scaleX(0.7679);-webkit-text-stroke:0.1px #262626;">4536</div>
<div style="left:368.5px;top:82.20000000000002px;width:11.7px;height:0.5px;background:#c8c8c8;"></div>
<div class="t" style="left:468.20px;top:77px;font-size:5.6px;line-height:5.6px;font-family:'Liberation Serif';font-weight:normal;color:#1e1e1e;transform:scaleX(0.8052);-webkit-text-stroke:0.1px #1e1e1e;">$15.00</div>
<div class="t" style="left:431.70px;top:77px;font-size:5.6px;line-height:5.6px;font-family:'Liberation Serif';font-weight:normal;color:#262626;transform:scaleX(0.7679);-webkit-text-stroke:0.1px #262626;">4457</div>
<div style="left:428.5px;top:82.20000000000002px;width:11.7px;height:0.5px;background:#cccccc;"></div>
<div style="left:488px;top:81.50000000000001px;width:11px;height:0.5px;background:#d4d4d4;"></div>
<div class="t" style="left:406.10px;top:86px;font-size:5.6px;line-height:5.6px;font-family:'Liberation Serif';font-weight:normal;color:#1e1e1e;transform:scaleX(0.8187);-webkit-text-stroke:0.1px #1e1e1e;">$150.00</div>
<div class="t" style="left:371.60px;top:86px;font-size:5.6px;line-height:5.6px;font-family:'Liberation Serif';font-weight:normal;color:#262626;transform:scaleX(0.7679);-webkit-text-stroke:0.1px #262626;">1236</div>
<div style="left:368.5px;top:91.0px;width:11.7px;height:0.5px;background:#c8c8c8;"></div>
<div style="left:428.5px;top:91.0px;width:11.7px;height:0.5px;background:#cccccc;"></div>
<div class="t" style="left:408.60px;top:95px;font-size:5.6px;line-height:5.6px;font-family:'Liberation Serif';font-weight:normal;color:#1e1e1e;transform:scaleX(0.8052);-webkit-text-stroke:0.1px #1e1e1e;">$50.00</div>
<div class="t" style="left:371.60px;top:95px;font-size:5.6px;line-height:5.6px;font-family:'Liberation Serif';font-weight:normal;color:#262626;transform:scaleX(0.7679);-webkit-text-stroke:0.1px #262626;">7778</div>
<div style="left:368.5px;top:99.80000000000001px;width:11.7px;height:0.5px;background:#c8c8c8;"></div>
<div style="left:428.5px;top:99.80000000000001px;width:11.7px;height:0.5px;background:#cccccc;"></div>
<div class="t" style="left:519.50px;top:86px;font-size:5.6px;line-height:5.6px;font-family:'Liberation Serif';font-weight:normal;color:#1e1e1e;transform:scaleX(0.8705);-webkit-text-stroke:0.1px #1e1e1e;">$1,260.30</div>
<div class="t" style="left:493.20px;top:88px;font-size:2.0px;line-height:2.0px;font-family:'Liberation Sans';font-weight:normal;color:#a0a0a0;transform:scaleX(0.9640);">SUBTOTAL</div>
<div class="t" style="left:494.50px;top:92px;font-size:2.0px;line-height:2.0px;font-family:'Liberation Sans';font-weight:normal;color:#a0a0a0;transform:scaleX(1.1732);">LESS</div>
<div class="t" style="left:494.50px;top:95px;font-size:2.0px;line-height:2.0px;font-family:'Liberation Sans';font-weight:normal;color:#a0a0a0;transform:scaleX(1.0798);">CASH</div>
<div class="t" style="left:492.80px;top:97px;font-size:2.0px;line-height:2.0px;font-family:'Liberation Sans';font-weight:normal;color:#a0a0a0;transform:scaleX(1.0758);">RECEIVED</div>
<div style="left:488px;top:91.2px;width:11px;height:0.5px;background:#d0d0d0;"></div>
<div class="t" style="left:376.30px;top:106px;font-size:2.0px;line-height:2.0px;font-family:'Liberation Sans';font-weight:normal;color:#8a8a8a;transform:scaleX(0.7189);">CHECKS AND OTHER ITEMS ARE RECEIVED FOR DEPOSIT SUBJECT TO THE</div>
<div class="t" style="left:376.30px;top:109px;font-size:2.0px;line-height:2.0px;font-family:'Liberation Sans';font-weight:normal;color:#8a8a8a;transform:scaleX(0.7464);">PROVISIONS OF THE UNIFORM COMMERCIAL CODE OR ANY APPLICABLE</div>
<div class="t" style="left:376.30px;top:111px;font-size:2.0px;line-height:2.0px;font-family:'Liberation Sans';font-weight:normal;color:#8a8a8a;transform:scaleX(0.8801);">COLLECTION AGREEMENT. DEPOSITS MAY NOT BE AVAILABLE</div>
<div class="t" style="left:439.25px;top:109px;font-size:2.4px;line-height:2.4px;font-family:'Liberation Sans';font-weight:normal;color:#8a8a8a;transform:scaleX(0.8652);">TOTAL</div>
<div class="t" style="left:436.75px;top:112px;font-size:2.4px;line-height:2.4px;font-family:'Liberation Sans';font-weight:normal;color:#8a8a8a;transform:scaleX(0.7986);">NUMBER OF</div>
<div class="t" style="left:436.75px;top:116px;font-size:2.4px;line-height:2.4px;font-family:'Liberation Sans';font-weight:normal;color:#8a8a8a;transform:scaleX(0.8292);">DEPOSITED</div>
<div class="t" style="left:439.25px;top:119px;font-size:2.4px;line-height:2.4px;font-family:'Liberation Sans';font-weight:normal;color:#8a8a8a;transform:scaleX(0.8863);">ITEMS</div>
<div style="left:455.3px;top:110.2px;width:17.7px;height:10px;border:1.8px solid #cfd3d6;box-sizing:border-box;"></div>
<div style="left:490.5px;top:110px;width:57px;height:10.5px;border:1.8px solid #cfd3d6;box-sizing:border-box;"></div>
<div class="t" style="left:519.00px;top:115px;font-size:5.6px;line-height:5.6px;font-family:'Liberation Serif';font-weight:normal;color:#1e1e1e;transform:scaleX(0.8705);-webkit-text-stroke:0.1px #1e1e1e;">$1,260.30</div>
<div class="t" style="left:376.30px;top:126px;font-size:5.0px;line-height:5.0px;font-family:'Liberation Sans';font-weight:normal;color:#404040;transform:scaleX(1.3732);">:0123456789:</div>
<div class="t" style="left:423.00px;top:126px;font-size:5.0px;line-height:5.0px;font-family:'Liberation Sans';font-weight:normal;color:#404040;transform:scaleX(1.2818);">=0123</div>
<div class="t" style="left:445.70px;top:126px;font-size:5.0px;line-height:5.0px;font-family:'Liberation Sans';font-weight:normal;color:#404040;transform:scaleX(1.3319);">456=</div>
<div class="t" style="left:403.00px;top:152px;font-size:5.4px;line-height:5.4px;font-family:'Liberation Serif';font-weight:bold;color:#2a2a2a;transform:scaleX(0.8424);">Deposit Summary</div>
<div class="t" style="left:304.00px;top:158px;font-size:5.3px;line-height:5.3px;font-family:'Liberation Serif';font-weight:normal;color:#2e2e2e;transform:scaleX(0.9148);">Date:</div>
<div class="t" style="left:319.90px;top:158px;font-size:5.3px;line-height:5.3px;font-family:'Liberation Serif';font-weight:normal;color:#2e2e2e;transform:scaleX(0.8915);">10/20/10</div>
<div class="t" style="left:304.00px;top:164px;font-size:5.3px;line-height:5.3px;font-family:'Liberation Serif';font-weight:normal;color:#2e2e2e;transform:scaleX(0.8793);">Deposit to Account: 1-1110  Checking Account</div>
<div class="t" style="left:334.80px;top:177px;font-size:5.3px;line-height:5.3px;font-family:'Liberation Serif';font-weight:normal;color:#2e2e2e;">Cash</div>
<div class="t" style="left:367.70px;top:177px;font-size:5.3px;line-height:5.3px;font-family:'Liberation Serif';font-weight:normal;color:#2e2e2e;transform:scaleX(0.9000);">birthday  cake</div>
<div class="t" style="left:522.50px;top:177px;font-size:5.2px;line-height:5.2px;font-family:'Liberation Serif';font-weight:normal;color:#2e2e2e;transform:scaleX(0.9231);">$25.00</div>
<div class="t" style="left:334.80px;top:182px;font-size:5.3px;line-height:5.3px;font-family:'Liberation Serif';font-weight:normal;color:#2e2e2e;">Cash</div>
<div class="t" style="left:367.70px;top:182px;font-size:5.3px;line-height:5.3px;font-family:'Liberation Serif';font-weight:normal;color:#2e2e2e;transform:scaleX(0.9000);">Bakery Goods</div>
<div class="t" style="left:522.50px;top:182px;font-size:5.2px;line-height:5.2px;font-family:'Liberation Serif';font-weight:normal;color:#2e2e2e;transform:scaleX(0.9231);">$25.63</div>
<div class="t" style="left:334.80px;top:187px;font-size:5.3px;line-height:5.3px;font-family:'Liberation Serif';font-weight:normal;color:#2e2e2e;">Cash</div>
<div class="t" style="left:367.70px;top:187px;font-size:5.3px;line-height:5.3px;font-family:'Liberation Serif';font-weight:normal;color:#2e2e2e;transform:scaleX(0.9000);">Breads and pies</div>
<div class="t" style="left:522.50px;top:187px;font-size:5.2px;line-height:5.2px;font-family:'Liberation Serif';font-weight:normal;color:#2e2e2e;transform:scaleX(0.9231);">$34.55</div>
<div class="t" style="left:334.80px;top:192px;font-size:5.3px;line-height:5.3px;font-family:'Liberation Serif';font-weight:normal;color:#2e2e2e;">Cash</div>
<div class="t" style="left:367.70px;top:192px;font-size:5.3px;line-height:5.3px;font-family:'Liberation Serif';font-weight:normal;color:#2e2e2e;transform:scaleX(0.9000);">Cakes</div>
<div class="t" style="left:522.50px;top:192px;font-size:5.2px;line-height:5.2px;font-family:'Liberation Serif';font-weight:normal;color:#2e2e2e;transform:scaleX(0.9231);">$44.95</div>
<div class="t" style="left:304.00px;top:197px;font-size:5.2px;line-height:5.2px;font-family:'Liberation Serif';font-weight:normal;color:#2e2e2e;transform:scaleX(0.9200);">1234</div>
<div class="t" style="left:334.80px;top:197px;font-size:5.3px;line-height:5.3px;font-family:'Liberation Serif';font-weight:normal;color:#2e2e2e;">Check</div>
<div class="t" style="left:367.70px;top:197px;font-size:5.3px;line-height:5.3px;font-family:'Liberation Serif';font-weight:normal;color:#2e2e2e;transform:scaleX(0.9000);">Melissa Anderson</div>
<div class="t" style="left:522.50px;top:197px;font-size:5.2px;line-height:5.2px;font-family:'Liberation Serif';font-weight:normal;color:#2e2e2e;transform:scaleX(0.9231);">$10.00</div>
<div class="t" style="left:304.00px;top:203px;font-size:5.2px;line-height:5.2px;font-family:'Liberation Serif';font-weight:normal;color:#2a4b70;transform:scaleX(0.9200);">242424</div>
<div class="t" style="left:334.80px;top:203px;font-size:5.3px;line-height:5.3px;font-family:'Liberation Serif';font-weight:normal;color:#2a4b70;">Check</div>
<div class="t" style="left:367.70px;top:203px;font-size:5.3px;line-height:5.3px;font-family:'Liberation Serif';font-weight:normal;color:#2a4b70;transform:scaleX(0.9000);">Bob Jones</div>
<div class="t" style="left:520.00px;top:203px;font-size:5.2px;line-height:5.2px;font-family:'Liberation Serif';font-weight:normal;color:#2a4b70;transform:scaleX(0.9290);">$100.00</div>
<div class="t" style="left:304.00px;top:208px;font-size:5.2px;line-height:5.2px;font-family:'Liberation Serif';font-weight:normal;color:#2a4b70;transform:scaleX(0.9200);">3765</div>
<div class="t" style="left:334.80px;top:208px;font-size:5.3px;line-height:5.3px;font-family:'Liberation Serif';font-weight:normal;color:#2a4b70;">Check</div>
<div class="t" style="left:367.70px;top:208px;font-size:5.3px;line-height:5.3px;font-family:'Liberation Serif';font-weight:normal;color:#2a4b70;transform:scaleX(0.9000);">Holiday  Pies</div>
<div class="t" style="left:522.50px;top:208px;font-size:5.2px;line-height:5.2px;font-family:'Liberation Serif';font-weight:normal;color:#2a4b70;transform:scaleX(0.9231);">$50.00</div>
<div class="t" style="left:304.00px;top:213px;font-size:5.2px;line-height:5.2px;font-family:'Liberation Serif';font-weight:normal;color:#2a4b70;transform:scaleX(0.9200);">4536</div>
<div class="t" style="left:334.80px;top:213px;font-size:5.3px;line-height:5.3px;font-family:'Liberation Serif';font-weight:normal;color:#2a4b70;">Check</div>
<div class="t" style="left:367.70px;top:213px;font-size:5.3px;line-height:5.3px;font-family:'Liberation Serif';font-weight:normal;color:#2a4b70;transform:scaleX(0.9000);">Wedding</div>
<div class="t" style="left:520.00px;top:213px;font-size:5.2px;line-height:5.2px;font-family:'Liberation Serif';font-weight:normal;color:#2a4b70;transform:scaleX(0.9290);">$500.00</div>
<div class="t" style="left:304.00px;top:218px;font-size:5.2px;line-height:5.2px;font-family:'Liberation Serif';font-weight:normal;color:#2a4b70;transform:scaleX(0.9200);">1236</div>
<div class="t" style="left:334.80px;top:218px;font-size:5.3px;line-height:5.3px;font-family:'Liberation Serif';font-weight:normal;color:#2a4b70;">Check</div>
<div class="t" style="left:367.70px;top:218px;font-size:5.3px;line-height:5.3px;font-family:'Liberation Serif';font-weight:normal;color:#2a4b70;transform:scaleX(0.9000);">Large Cake</div>
<div class="t" style="left:520.00px;top:218px;font-size:5.2px;line-height:5.2px;font-family:'Liberation Serif';font-weight:normal;color:#2a4b70;transform:scaleX(0.9290);">$150.00</div>
<div class="t" style="left:304.00px;top:223px;font-size:5.2px;line-height:5.2px;font-family:'Liberation Serif';font-weight:normal;color:#2a4b70;transform:scaleX(0.9200);">7778</div>
<div class="t" style="left:334.80px;top:223px;font-size:5.3px;line-height:5.3px;font-family:'Liberation Serif';font-weight:normal;color:#2a4b70;">Check</div>
<div class="t" style="left:367.70px;top:223px;font-size:5.3px;line-height:5.3px;font-family:'Liberation Serif';font-weight:normal;color:#2a4b70;transform:scaleX(0.9000);">Cake</div>
<div class="t" style="left:522.50px;top:223px;font-size:5.2px;line-height:5.2px;font-family:'Liberation Serif';font-weight:normal;color:#2a4b70;transform:scaleX(0.9231);">$50.00</div>
<div class="t" style="left:304.00px;top:229px;font-size:5.2px;line-height:5.2px;font-family:'Liberation Serif';font-weight:normal;color:#2a4b70;transform:scaleX(0.9200);">7779</div>
<div class="t" style="left:334.80px;top:229px;font-size:5.3px;line-height:5.3px;font-family:'Liberation Serif';font-weight:normal;color:#2a4b70;">Check</div>
<div class="t" style="left:367.70px;top:229px;font-size:5.3px;line-height:5.3px;font-family:'Liberation Serif';font-weight:normal;color:#2a4b70;transform:scaleX(0.9000);">Pies</div>
<div class="t" style="left:522.50px;top:229px;font-size:5.2px;line-height:5.2px;font-family:'Liberation Serif';font-weight:normal;color:#2a4b70;transform:scaleX(0.9231);">$75.00</div>
<div class="t" style="left:304.00px;top:234px;font-size:5.2px;line-height:5.2px;font-family:'Liberation Serif';font-weight:normal;color:#2a4b70;transform:scaleX(0.9200);">7779</div>
<div class="t" style="left:334.80px;top:234px;font-size:5.3px;line-height:5.3px;font-family:'Liberation Serif';font-weight:normal;color:#2a4b70;">Check</div>
<div class="t" style="left:367.70px;top:234px;font-size:5.3px;line-height:5.3px;font-family:'Liberation Serif';font-weight:normal;color:#2a4b70;transform:scaleX(0.9000);">Party  Cake</div>
<div class="t" style="left:520.00px;top:234px;font-size:5.2px;line-height:5.2px;font-family:'Liberation Serif';font-weight:normal;color:#2a4b70;transform:scaleX(0.9290);">$125.00</div>
<div class="t" style="left:304.00px;top:239px;font-size:5.2px;line-height:5.2px;font-family:'Liberation Serif';font-weight:normal;color:#2a4b70;transform:scaleX(0.9200);">7780</div>
<div class="t" style="left:334.80px;top:239px;font-size:5.3px;line-height:5.3px;font-family:'Liberation Serif';font-weight:normal;color:#2a4b70;">Check</div>
<div class="t" style="left:367.70px;top:239px;font-size:5.3px;line-height:5.3px;font-family:'Liberation Serif';font-weight:normal;color:#2a4b70;transform:scaleX(0.9000);">Bread and rolls</div>
<div class="t" style="left:522.50px;top:239px;font-size:5.2px;line-height:5.2px;font-family:'Liberation Serif';font-weight:normal;color:#2a4b70;transform:scaleX(0.9231);">$30.00</div>
<div class="t" style="left:304.00px;top:244px;font-size:5.2px;line-height:5.2px;font-family:'Liberation Serif';font-weight:normal;color:#2a4b70;transform:scaleX(0.9200);">5544</div>
<div class="t" style="left:334.80px;top:244px;font-size:5.3px;line-height:5.3px;font-family:'Liberation Serif';font-weight:normal;color:#2a4b70;">Check</div>
<div class="t" style="left:367.70px;top:244px;font-size:5.3px;line-height:5.3px;font-family:'Liberation Serif';font-weight:normal;color:#2a4b70;transform:scaleX(0.9000);">Bread</div>
<div class="t" style="left:522.50px;top:244px;font-size:5.2px;line-height:5.2px;font-family:'Liberation Serif';font-weight:normal;color:#2a4b70;transform:scaleX(0.9231);">$25.25</div>
<div class="t" style="left:304.00px;top:249px;font-size:5.2px;line-height:5.2px;font-family:'Liberation Serif';font-weight:normal;color:#2a4b70;transform:scaleX(0.9200);">4457</div>
<div class="t" style="left:334.80px;top:249px;font-size:5.3px;line-height:5.3px;font-family:'Liberation Serif';font-weight:normal;color:#2a4b70;">Check</div>
<div class="t" style="left:367.70px;top:249px;font-size:5.3px;line-height:5.3px;font-family:'Liberation Serif';font-weight:normal;color:#2a4b70;transform:scaleX(0.9000);">Cookies</div>
<div class="t" style="left:522.50px;top:249px;font-size:5.2px;line-height:5.2px;font-family:'Liberation Serif';font-weight:normal;color:#2a4b70;transform:scaleX(0.9231);">$15.00</div>
<div class="t" style="left:468.60px;top:339px;font-size:5.6px;line-height:5.6px;font-family:'Liberation Serif';font-weight:normal;color:#2e2e2e;transform:scaleX(0.9476);-webkit-text-stroke:0.02px #2e2e2e;">Deposit Subtotal:</div>
<div class="t" style="left:466.00px;top:345px;font-size:5.6px;line-height:5.6px;font-family:'Liberation Serif';font-weight:normal;color:#2e2e2e;transform:scaleX(0.8488);-webkit-text-stroke:0.02px #2e2e2e;">Less Cash Received:</div>
<div class="t" style="left:475.60px;top:352px;font-size:5.6px;line-height:5.6px;font-family:'Liberation Serif';font-weight:normal;color:#2e2e2e;transform:scaleX(0.9433);-webkit-text-stroke:0.02px #2e2e2e;">Deposit Total:</div>
<div class="t" style="left:519.00px;top:339px;font-size:5.4px;line-height:5.4px;font-family:'Liberation Serif';font-weight:normal;color:#2e2e2e;transform:scaleX(0.8519);-webkit-text-stroke:0.02px #2e2e2e;">$1,260.30</div>
<div class="t" style="left:519.00px;top:352px;font-size:5.4px;line-height:5.4px;font-family:'Liberation Serif';font-weight:normal;color:#2e2e2e;transform:scaleX(0.8519);-webkit-text-stroke:0.02px #2e2e2e;">$1,260.30</div>
<div class="t" style="left:296.00px;top:362px;font-size:2.4px;line-height:2.4px;font-family:'Liberation Sans';font-weight:normal;color:#c4c4c4;transform:scaleX(1.2636);">Deposit Slip Summary</div>
</div>
</body></html>
